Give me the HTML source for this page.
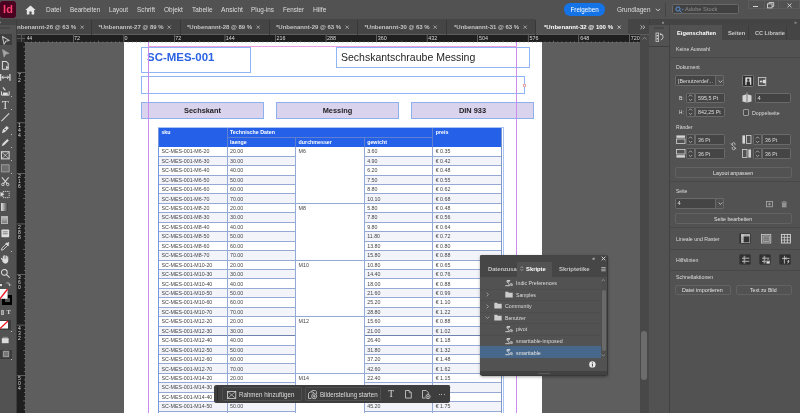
<!DOCTYPE html>
<html lang="de"><head><meta charset="utf-8"><title>InDesign</title>
<style>
html,body{margin:0;padding:0;}
body{width:800px;height:413px;overflow:hidden;position:relative;background:#5e5e5e;will-change:transform;font-family:"Liberation Sans",sans-serif;}
.a{position:absolute;display:block;}
.t{white-space:nowrap;}
svg{overflow:visible;}
</style></head><body>
<div class="a" style="left:25.50px;top:42.00px;width:615.00px;height:371.00px;background:#5e5e5e;"></div>
<div class="a" style="left:123.50px;top:42.00px;width:418.80px;height:371.00px;background:#ffffff;"></div>
<div class="a" style="left:141.00px;top:47.00px;width:109.50px;height:25.50px;border:0.7px solid #8fb5f4;box-sizing:border-box;"></div>
<div class="a" style="left:335.50px;top:47.30px;width:194.00px;height:21.10px;border:0.7px solid #8fb5f4;box-sizing:border-box;"></div>
<div class="a" style="left:141.00px;top:76.00px;width:384.00px;height:18.00px;border:0.7px solid #8fb5f4;box-sizing:border-box;"></div>
<div class="a" style="left:523.40px;top:84.00px;width:2.60px;height:2.80px;background:#fff;border:0.6px solid #e8a6a6;box-sizing:border-box;"></div>
<div class="a" style="left:141.00px;top:102.00px;width:123.00px;height:17.00px;background:#dad3ee;border:0.8px solid #8fb0ee;box-sizing:border-box;"></div>
<div class="a" style="left:276.00px;top:102.00px;width:123.00px;height:17.00px;background:#dad3ee;border:0.8px solid #8fb0ee;box-sizing:border-box;"></div>
<div class="a" style="left:411.00px;top:102.00px;width:123.00px;height:17.00px;background:#dad3ee;border:0.8px solid #8fb0ee;box-sizing:border-box;"></div>
<span class="a t" style="top:106px;font-size:7.4px;line-height:9px;height:9px;color:#1c1c1c;font-weight:bold;left:183.99px;transform-origin:50% 50%;">Sechskant</span>
<span class="a t" style="top:106px;font-size:7.4px;line-height:9px;height:9px;color:#1c1c1c;font-weight:bold;left:322.70px;transform-origin:50% 50%;">Messing</span>
<span class="a t" style="top:106px;font-size:7.4px;line-height:9px;height:9px;color:#1c1c1c;font-weight:bold;left:458.93px;transform-origin:50% 50%;">DIN 933</span>
<span class="a t" style="top:51px;font-size:11.4px;line-height:12px;height:12px;color:#2b63e3;font-weight:bold;left:147.00px;transform-origin:0 50%;transform:scaleX(1.005);">SC-MES-001</span>
<span class="a t" style="top:51px;font-size:10.5px;line-height:12px;height:12px;color:#1e1e1e;left:341.00px;transform-origin:0 50%;">Sechskantschraube Messing</span>
<div class="a" style="left:157.60px;top:127.20px;width:346.40px;height:290.00px;border:0.7px solid #a9c4f3;box-sizing:border-box;"></div>
<div class="a" style="left:158.40px;top:127.55px;width:343.20px;height:19.05px;background:#2560e8;"></div>
<div class="a" style="left:227.00px;top:136.75px;width:205.70px;height:0.70px;background:#5f7fd0;"></div>
<div class="a" style="left:226.70px;top:127.55px;width:0.70px;height:19.05px;background:#5f7fd0;"></div>
<div class="a" style="left:432.40px;top:127.55px;width:0.70px;height:19.05px;background:#5f7fd0;"></div>
<div class="a" style="left:295.30px;top:137.05px;width:0.70px;height:9.55px;background:#5f7fd0;"></div>
<div class="a" style="left:363.90px;top:137.05px;width:0.70px;height:9.55px;background:#5f7fd0;"></div>
<span class="a t" style="top:129px;font-size:5.3px;line-height:6px;height:6px;color:#fff;font-weight:bold;left:161.40px;transform-origin:0 50%;">sku</span>
<span class="a t" style="top:129px;font-size:5.3px;line-height:6px;height:6px;color:#fff;font-weight:bold;left:230.00px;transform-origin:0 50%;">Technische Daten</span>
<span class="a t" style="top:129px;font-size:5.3px;line-height:6px;height:6px;color:#fff;font-weight:bold;left:435.70px;transform-origin:0 50%;">preis</span>
<span class="a t" style="top:139px;font-size:5.3px;line-height:6px;height:6px;color:#fff;font-weight:bold;left:230.00px;transform-origin:0 50%;">laenge</span>
<span class="a t" style="top:139px;font-size:5.3px;line-height:6px;height:6px;color:#fff;font-weight:bold;left:298.60px;transform-origin:0 50%;">durchmesser</span>
<span class="a t" style="top:139px;font-size:5.3px;line-height:6px;height:6px;color:#fff;font-weight:bold;left:367.20px;transform-origin:0 50%;">gewicht</span>
<div class="a" style="left:158.40px;top:156.04px;width:137.20px;height:9.45px;background:#f2f4fa;"></div>
<div class="a" style="left:364.20px;top:156.04px;width:137.40px;height:9.45px;background:#f2f4fa;"></div>
<div class="a" style="left:158.40px;top:174.94px;width:137.20px;height:9.45px;background:#f2f4fa;"></div>
<div class="a" style="left:364.20px;top:174.94px;width:137.40px;height:9.45px;background:#f2f4fa;"></div>
<div class="a" style="left:158.40px;top:193.82px;width:137.20px;height:9.45px;background:#f2f4fa;"></div>
<div class="a" style="left:364.20px;top:193.82px;width:137.40px;height:9.45px;background:#f2f4fa;"></div>
<div class="a" style="left:158.40px;top:212.72px;width:137.20px;height:9.45px;background:#f2f4fa;"></div>
<div class="a" style="left:364.20px;top:212.72px;width:137.40px;height:9.45px;background:#f2f4fa;"></div>
<div class="a" style="left:158.40px;top:231.60px;width:137.20px;height:9.45px;background:#f2f4fa;"></div>
<div class="a" style="left:364.20px;top:231.60px;width:137.40px;height:9.45px;background:#f2f4fa;"></div>
<div class="a" style="left:158.40px;top:250.50px;width:137.20px;height:9.45px;background:#f2f4fa;"></div>
<div class="a" style="left:364.20px;top:250.50px;width:137.40px;height:9.45px;background:#f2f4fa;"></div>
<div class="a" style="left:158.40px;top:269.38px;width:137.20px;height:9.45px;background:#f2f4fa;"></div>
<div class="a" style="left:364.20px;top:269.38px;width:137.40px;height:9.45px;background:#f2f4fa;"></div>
<div class="a" style="left:158.40px;top:288.27px;width:137.20px;height:9.45px;background:#f2f4fa;"></div>
<div class="a" style="left:364.20px;top:288.27px;width:137.40px;height:9.45px;background:#f2f4fa;"></div>
<div class="a" style="left:158.40px;top:307.16px;width:137.20px;height:9.45px;background:#f2f4fa;"></div>
<div class="a" style="left:364.20px;top:307.16px;width:137.40px;height:9.45px;background:#f2f4fa;"></div>
<div class="a" style="left:158.40px;top:326.06px;width:137.20px;height:9.45px;background:#f2f4fa;"></div>
<div class="a" style="left:364.20px;top:326.06px;width:137.40px;height:9.45px;background:#f2f4fa;"></div>
<div class="a" style="left:158.40px;top:344.94px;width:137.20px;height:9.45px;background:#f2f4fa;"></div>
<div class="a" style="left:364.20px;top:344.94px;width:137.40px;height:9.45px;background:#f2f4fa;"></div>
<div class="a" style="left:158.40px;top:363.84px;width:137.20px;height:9.45px;background:#f2f4fa;"></div>
<div class="a" style="left:364.20px;top:363.84px;width:137.40px;height:9.45px;background:#f2f4fa;"></div>
<div class="a" style="left:158.40px;top:382.73px;width:137.20px;height:9.45px;background:#f2f4fa;"></div>
<div class="a" style="left:364.20px;top:382.73px;width:137.40px;height:9.45px;background:#f2f4fa;"></div>
<div class="a" style="left:158.40px;top:401.62px;width:137.20px;height:9.45px;background:#f2f4fa;"></div>
<div class="a" style="left:364.20px;top:401.62px;width:137.40px;height:9.45px;background:#f2f4fa;"></div>
<span class="a t" style="top:148px;font-size:5.3px;line-height:6px;height:6px;color:#444444;left:161.40px;transform-origin:0 50%;">SC-MES-001-M6-20</span>
<span class="a t" style="top:148px;font-size:5.3px;line-height:6px;height:6px;color:#444444;left:230.00px;transform-origin:0 50%;">20.00</span>
<span class="a t" style="top:148px;font-size:5.3px;line-height:6px;height:6px;color:#444444;left:298.60px;transform-origin:0 50%;">M6</span>
<span class="a t" style="top:148px;font-size:5.3px;line-height:6px;height:6px;color:#444444;left:367.20px;transform-origin:0 50%;">3.60</span>
<span class="a t" style="top:148px;font-size:5.3px;line-height:6px;height:6px;color:#444444;left:435.70px;transform-origin:0 50%;">€ 0.35</span>
<div class="a" style="left:158.40px;top:155.64px;width:137.20px;height:0.80px;background:#94a9d4;"></div>
<div class="a" style="left:364.20px;top:155.64px;width:137.40px;height:0.80px;background:#94a9d4;"></div>
<span class="a t" style="top:158px;font-size:5.3px;line-height:6px;height:6px;color:#444444;left:161.40px;transform-origin:0 50%;">SC-MES-001-M6-30</span>
<span class="a t" style="top:158px;font-size:5.3px;line-height:6px;height:6px;color:#444444;left:230.00px;transform-origin:0 50%;">30.00</span>
<span class="a t" style="top:158px;font-size:5.3px;line-height:6px;height:6px;color:#444444;left:367.20px;transform-origin:0 50%;">4.90</span>
<span class="a t" style="top:158px;font-size:5.3px;line-height:6px;height:6px;color:#444444;left:435.70px;transform-origin:0 50%;">€ 0.42</span>
<div class="a" style="left:158.40px;top:165.09px;width:137.20px;height:0.80px;background:#94a9d4;"></div>
<div class="a" style="left:364.20px;top:165.09px;width:137.40px;height:0.80px;background:#94a9d4;"></div>
<span class="a t" style="top:167px;font-size:5.3px;line-height:6px;height:6px;color:#444444;left:161.40px;transform-origin:0 50%;">SC-MES-001-M6-40</span>
<span class="a t" style="top:167px;font-size:5.3px;line-height:6px;height:6px;color:#444444;left:230.00px;transform-origin:0 50%;">40.00</span>
<span class="a t" style="top:167px;font-size:5.3px;line-height:6px;height:6px;color:#444444;left:367.20px;transform-origin:0 50%;">6.20</span>
<span class="a t" style="top:167px;font-size:5.3px;line-height:6px;height:6px;color:#444444;left:435.70px;transform-origin:0 50%;">€ 0.48</span>
<div class="a" style="left:158.40px;top:174.53px;width:137.20px;height:0.80px;background:#94a9d4;"></div>
<div class="a" style="left:364.20px;top:174.53px;width:137.40px;height:0.80px;background:#94a9d4;"></div>
<span class="a t" style="top:177px;font-size:5.3px;line-height:6px;height:6px;color:#444444;left:161.40px;transform-origin:0 50%;">SC-MES-001-M6-50</span>
<span class="a t" style="top:177px;font-size:5.3px;line-height:6px;height:6px;color:#444444;left:230.00px;transform-origin:0 50%;">50.00</span>
<span class="a t" style="top:177px;font-size:5.3px;line-height:6px;height:6px;color:#444444;left:367.20px;transform-origin:0 50%;">7.50</span>
<span class="a t" style="top:177px;font-size:5.3px;line-height:6px;height:6px;color:#444444;left:435.70px;transform-origin:0 50%;">€ 0.55</span>
<div class="a" style="left:158.40px;top:183.98px;width:137.20px;height:0.80px;background:#94a9d4;"></div>
<div class="a" style="left:364.20px;top:183.98px;width:137.40px;height:0.80px;background:#94a9d4;"></div>
<span class="a t" style="top:186px;font-size:5.3px;line-height:6px;height:6px;color:#444444;left:161.40px;transform-origin:0 50%;">SC-MES-001-M6-60</span>
<span class="a t" style="top:186px;font-size:5.3px;line-height:6px;height:6px;color:#444444;left:230.00px;transform-origin:0 50%;">60.00</span>
<span class="a t" style="top:186px;font-size:5.3px;line-height:6px;height:6px;color:#444444;left:367.20px;transform-origin:0 50%;">8.80</span>
<span class="a t" style="top:186px;font-size:5.3px;line-height:6px;height:6px;color:#444444;left:435.70px;transform-origin:0 50%;">€ 0.62</span>
<div class="a" style="left:158.40px;top:193.42px;width:137.20px;height:0.80px;background:#94a9d4;"></div>
<div class="a" style="left:364.20px;top:193.42px;width:137.40px;height:0.80px;background:#94a9d4;"></div>
<span class="a t" style="top:196px;font-size:5.3px;line-height:6px;height:6px;color:#444444;left:161.40px;transform-origin:0 50%;">SC-MES-001-M6-70</span>
<span class="a t" style="top:196px;font-size:5.3px;line-height:6px;height:6px;color:#444444;left:230.00px;transform-origin:0 50%;">70.00</span>
<span class="a t" style="top:196px;font-size:5.3px;line-height:6px;height:6px;color:#444444;left:367.20px;transform-origin:0 50%;">10.10</span>
<span class="a t" style="top:196px;font-size:5.3px;line-height:6px;height:6px;color:#444444;left:435.70px;transform-origin:0 50%;">€ 0.68</span>
<div class="a" style="left:158.40px;top:202.87px;width:343.20px;height:0.80px;background:#94a9d4;"></div>
<span class="a t" style="top:205px;font-size:5.3px;line-height:6px;height:6px;color:#444444;left:161.40px;transform-origin:0 50%;">SC-MES-001-M8-20</span>
<span class="a t" style="top:205px;font-size:5.3px;line-height:6px;height:6px;color:#444444;left:230.00px;transform-origin:0 50%;">20.00</span>
<span class="a t" style="top:205px;font-size:5.3px;line-height:6px;height:6px;color:#444444;left:298.60px;transform-origin:0 50%;">M8</span>
<span class="a t" style="top:205px;font-size:5.3px;line-height:6px;height:6px;color:#444444;left:367.20px;transform-origin:0 50%;">5.80</span>
<span class="a t" style="top:205px;font-size:5.3px;line-height:6px;height:6px;color:#444444;left:435.70px;transform-origin:0 50%;">€ 0.48</span>
<div class="a" style="left:158.40px;top:212.31px;width:137.20px;height:0.80px;background:#94a9d4;"></div>
<div class="a" style="left:364.20px;top:212.31px;width:137.40px;height:0.80px;background:#94a9d4;"></div>
<span class="a t" style="top:214px;font-size:5.3px;line-height:6px;height:6px;color:#444444;left:161.40px;transform-origin:0 50%;">SC-MES-001-M8-30</span>
<span class="a t" style="top:214px;font-size:5.3px;line-height:6px;height:6px;color:#444444;left:230.00px;transform-origin:0 50%;">30.00</span>
<span class="a t" style="top:214px;font-size:5.3px;line-height:6px;height:6px;color:#444444;left:367.20px;transform-origin:0 50%;">7.80</span>
<span class="a t" style="top:214px;font-size:5.3px;line-height:6px;height:6px;color:#444444;left:435.70px;transform-origin:0 50%;">€ 0.56</span>
<div class="a" style="left:158.40px;top:221.76px;width:137.20px;height:0.80px;background:#94a9d4;"></div>
<div class="a" style="left:364.20px;top:221.76px;width:137.40px;height:0.80px;background:#94a9d4;"></div>
<span class="a t" style="top:224px;font-size:5.3px;line-height:6px;height:6px;color:#444444;left:161.40px;transform-origin:0 50%;">SC-MES-001-M8-40</span>
<span class="a t" style="top:224px;font-size:5.3px;line-height:6px;height:6px;color:#444444;left:230.00px;transform-origin:0 50%;">40.00</span>
<span class="a t" style="top:224px;font-size:5.3px;line-height:6px;height:6px;color:#444444;left:367.20px;transform-origin:0 50%;">9.80</span>
<span class="a t" style="top:224px;font-size:5.3px;line-height:6px;height:6px;color:#444444;left:435.70px;transform-origin:0 50%;">€ 0.64</span>
<div class="a" style="left:158.40px;top:231.20px;width:137.20px;height:0.80px;background:#94a9d4;"></div>
<div class="a" style="left:364.20px;top:231.20px;width:137.40px;height:0.80px;background:#94a9d4;"></div>
<span class="a t" style="top:233px;font-size:5.3px;line-height:6px;height:6px;color:#444444;left:161.40px;transform-origin:0 50%;">SC-MES-001-M8-50</span>
<span class="a t" style="top:233px;font-size:5.3px;line-height:6px;height:6px;color:#444444;left:230.00px;transform-origin:0 50%;">50.00</span>
<span class="a t" style="top:233px;font-size:5.3px;line-height:6px;height:6px;color:#444444;left:367.20px;transform-origin:0 50%;">11.80</span>
<span class="a t" style="top:233px;font-size:5.3px;line-height:6px;height:6px;color:#444444;left:435.70px;transform-origin:0 50%;">€ 0.72</span>
<div class="a" style="left:158.40px;top:240.65px;width:137.20px;height:0.80px;background:#94a9d4;"></div>
<div class="a" style="left:364.20px;top:240.65px;width:137.40px;height:0.80px;background:#94a9d4;"></div>
<span class="a t" style="top:243px;font-size:5.3px;line-height:6px;height:6px;color:#444444;left:161.40px;transform-origin:0 50%;">SC-MES-001-M8-60</span>
<span class="a t" style="top:243px;font-size:5.3px;line-height:6px;height:6px;color:#444444;left:230.00px;transform-origin:0 50%;">60.00</span>
<span class="a t" style="top:243px;font-size:5.3px;line-height:6px;height:6px;color:#444444;left:367.20px;transform-origin:0 50%;">13.80</span>
<span class="a t" style="top:243px;font-size:5.3px;line-height:6px;height:6px;color:#444444;left:435.70px;transform-origin:0 50%;">€ 0.80</span>
<div class="a" style="left:158.40px;top:250.09px;width:137.20px;height:0.80px;background:#94a9d4;"></div>
<div class="a" style="left:364.20px;top:250.09px;width:137.40px;height:0.80px;background:#94a9d4;"></div>
<span class="a t" style="top:252px;font-size:5.3px;line-height:6px;height:6px;color:#444444;left:161.40px;transform-origin:0 50%;">SC-MES-001-M8-70</span>
<span class="a t" style="top:252px;font-size:5.3px;line-height:6px;height:6px;color:#444444;left:230.00px;transform-origin:0 50%;">70.00</span>
<span class="a t" style="top:252px;font-size:5.3px;line-height:6px;height:6px;color:#444444;left:367.20px;transform-origin:0 50%;">15.80</span>
<span class="a t" style="top:252px;font-size:5.3px;line-height:6px;height:6px;color:#444444;left:435.70px;transform-origin:0 50%;">€ 0.88</span>
<div class="a" style="left:158.40px;top:259.54px;width:343.20px;height:0.80px;background:#94a9d4;"></div>
<span class="a t" style="top:262px;font-size:5.3px;line-height:6px;height:6px;color:#444444;left:161.40px;transform-origin:0 50%;">SC-MES-001-M10-20</span>
<span class="a t" style="top:262px;font-size:5.3px;line-height:6px;height:6px;color:#444444;left:230.00px;transform-origin:0 50%;">20.00</span>
<span class="a t" style="top:262px;font-size:5.3px;line-height:6px;height:6px;color:#444444;left:298.60px;transform-origin:0 50%;">M10</span>
<span class="a t" style="top:262px;font-size:5.3px;line-height:6px;height:6px;color:#444444;left:367.20px;transform-origin:0 50%;">10.80</span>
<span class="a t" style="top:262px;font-size:5.3px;line-height:6px;height:6px;color:#444444;left:435.70px;transform-origin:0 50%;">€ 0.65</span>
<div class="a" style="left:158.40px;top:268.99px;width:137.20px;height:0.80px;background:#94a9d4;"></div>
<div class="a" style="left:364.20px;top:268.99px;width:137.40px;height:0.80px;background:#94a9d4;"></div>
<span class="a t" style="top:271px;font-size:5.3px;line-height:6px;height:6px;color:#444444;left:161.40px;transform-origin:0 50%;">SC-MES-001-M10-30</span>
<span class="a t" style="top:271px;font-size:5.3px;line-height:6px;height:6px;color:#444444;left:230.00px;transform-origin:0 50%;">30.00</span>
<span class="a t" style="top:271px;font-size:5.3px;line-height:6px;height:6px;color:#444444;left:367.20px;transform-origin:0 50%;">14.40</span>
<span class="a t" style="top:271px;font-size:5.3px;line-height:6px;height:6px;color:#444444;left:435.70px;transform-origin:0 50%;">€ 0.76</span>
<div class="a" style="left:158.40px;top:278.43px;width:137.20px;height:0.80px;background:#94a9d4;"></div>
<div class="a" style="left:364.20px;top:278.43px;width:137.40px;height:0.80px;background:#94a9d4;"></div>
<span class="a t" style="top:281px;font-size:5.3px;line-height:6px;height:6px;color:#444444;left:161.40px;transform-origin:0 50%;">SC-MES-001-M10-40</span>
<span class="a t" style="top:281px;font-size:5.3px;line-height:6px;height:6px;color:#444444;left:230.00px;transform-origin:0 50%;">40.00</span>
<span class="a t" style="top:281px;font-size:5.3px;line-height:6px;height:6px;color:#444444;left:367.20px;transform-origin:0 50%;">18.00</span>
<span class="a t" style="top:281px;font-size:5.3px;line-height:6px;height:6px;color:#444444;left:435.70px;transform-origin:0 50%;">€ 0.88</span>
<div class="a" style="left:158.40px;top:287.88px;width:137.20px;height:0.80px;background:#94a9d4;"></div>
<div class="a" style="left:364.20px;top:287.88px;width:137.40px;height:0.80px;background:#94a9d4;"></div>
<span class="a t" style="top:290px;font-size:5.3px;line-height:6px;height:6px;color:#444444;left:161.40px;transform-origin:0 50%;">SC-MES-001-M10-50</span>
<span class="a t" style="top:290px;font-size:5.3px;line-height:6px;height:6px;color:#444444;left:230.00px;transform-origin:0 50%;">50.00</span>
<span class="a t" style="top:290px;font-size:5.3px;line-height:6px;height:6px;color:#444444;left:367.20px;transform-origin:0 50%;">21.60</span>
<span class="a t" style="top:290px;font-size:5.3px;line-height:6px;height:6px;color:#444444;left:435.70px;transform-origin:0 50%;">€ 0.99</span>
<div class="a" style="left:158.40px;top:297.32px;width:137.20px;height:0.80px;background:#94a9d4;"></div>
<div class="a" style="left:364.20px;top:297.32px;width:137.40px;height:0.80px;background:#94a9d4;"></div>
<span class="a t" style="top:299px;font-size:5.3px;line-height:6px;height:6px;color:#444444;left:161.40px;transform-origin:0 50%;">SC-MES-001-M10-60</span>
<span class="a t" style="top:299px;font-size:5.3px;line-height:6px;height:6px;color:#444444;left:230.00px;transform-origin:0 50%;">60.00</span>
<span class="a t" style="top:299px;font-size:5.3px;line-height:6px;height:6px;color:#444444;left:367.20px;transform-origin:0 50%;">25.20</span>
<span class="a t" style="top:299px;font-size:5.3px;line-height:6px;height:6px;color:#444444;left:435.70px;transform-origin:0 50%;">€ 1.10</span>
<div class="a" style="left:158.40px;top:306.77px;width:137.20px;height:0.80px;background:#94a9d4;"></div>
<div class="a" style="left:364.20px;top:306.77px;width:137.40px;height:0.80px;background:#94a9d4;"></div>
<span class="a t" style="top:309px;font-size:5.3px;line-height:6px;height:6px;color:#444444;left:161.40px;transform-origin:0 50%;">SC-MES-001-M10-70</span>
<span class="a t" style="top:309px;font-size:5.3px;line-height:6px;height:6px;color:#444444;left:230.00px;transform-origin:0 50%;">70.00</span>
<span class="a t" style="top:309px;font-size:5.3px;line-height:6px;height:6px;color:#444444;left:367.20px;transform-origin:0 50%;">28.80</span>
<span class="a t" style="top:309px;font-size:5.3px;line-height:6px;height:6px;color:#444444;left:435.70px;transform-origin:0 50%;">€ 1.22</span>
<div class="a" style="left:158.40px;top:316.21px;width:343.20px;height:0.80px;background:#94a9d4;"></div>
<span class="a t" style="top:318px;font-size:5.3px;line-height:6px;height:6px;color:#444444;left:161.40px;transform-origin:0 50%;">SC-MES-001-M12-20</span>
<span class="a t" style="top:318px;font-size:5.3px;line-height:6px;height:6px;color:#444444;left:230.00px;transform-origin:0 50%;">20.00</span>
<span class="a t" style="top:318px;font-size:5.3px;line-height:6px;height:6px;color:#444444;left:298.60px;transform-origin:0 50%;">M12</span>
<span class="a t" style="top:318px;font-size:5.3px;line-height:6px;height:6px;color:#444444;left:367.20px;transform-origin:0 50%;">15.60</span>
<span class="a t" style="top:318px;font-size:5.3px;line-height:6px;height:6px;color:#444444;left:435.70px;transform-origin:0 50%;">€ 0.88</span>
<div class="a" style="left:158.40px;top:325.66px;width:137.20px;height:0.80px;background:#94a9d4;"></div>
<div class="a" style="left:364.20px;top:325.66px;width:137.40px;height:0.80px;background:#94a9d4;"></div>
<span class="a t" style="top:328px;font-size:5.3px;line-height:6px;height:6px;color:#444444;left:161.40px;transform-origin:0 50%;">SC-MES-001-M12-30</span>
<span class="a t" style="top:328px;font-size:5.3px;line-height:6px;height:6px;color:#444444;left:230.00px;transform-origin:0 50%;">30.00</span>
<span class="a t" style="top:328px;font-size:5.3px;line-height:6px;height:6px;color:#444444;left:367.20px;transform-origin:0 50%;">21.00</span>
<span class="a t" style="top:328px;font-size:5.3px;line-height:6px;height:6px;color:#444444;left:435.70px;transform-origin:0 50%;">€ 1.02</span>
<div class="a" style="left:158.40px;top:335.10px;width:137.20px;height:0.80px;background:#94a9d4;"></div>
<div class="a" style="left:364.20px;top:335.10px;width:137.40px;height:0.80px;background:#94a9d4;"></div>
<span class="a t" style="top:337px;font-size:5.3px;line-height:6px;height:6px;color:#444444;left:161.40px;transform-origin:0 50%;">SC-MES-001-M12-40</span>
<span class="a t" style="top:337px;font-size:5.3px;line-height:6px;height:6px;color:#444444;left:230.00px;transform-origin:0 50%;">40.00</span>
<span class="a t" style="top:337px;font-size:5.3px;line-height:6px;height:6px;color:#444444;left:367.20px;transform-origin:0 50%;">26.40</span>
<span class="a t" style="top:337px;font-size:5.3px;line-height:6px;height:6px;color:#444444;left:435.70px;transform-origin:0 50%;">€ 1.18</span>
<div class="a" style="left:158.40px;top:344.55px;width:137.20px;height:0.80px;background:#94a9d4;"></div>
<div class="a" style="left:364.20px;top:344.55px;width:137.40px;height:0.80px;background:#94a9d4;"></div>
<span class="a t" style="top:347px;font-size:5.3px;line-height:6px;height:6px;color:#444444;left:161.40px;transform-origin:0 50%;">SC-MES-001-M12-50</span>
<span class="a t" style="top:347px;font-size:5.3px;line-height:6px;height:6px;color:#444444;left:230.00px;transform-origin:0 50%;">50.00</span>
<span class="a t" style="top:347px;font-size:5.3px;line-height:6px;height:6px;color:#444444;left:367.20px;transform-origin:0 50%;">31.80</span>
<span class="a t" style="top:347px;font-size:5.3px;line-height:6px;height:6px;color:#444444;left:435.70px;transform-origin:0 50%;">€ 1.32</span>
<div class="a" style="left:158.40px;top:353.99px;width:137.20px;height:0.80px;background:#94a9d4;"></div>
<div class="a" style="left:364.20px;top:353.99px;width:137.40px;height:0.80px;background:#94a9d4;"></div>
<span class="a t" style="top:356px;font-size:5.3px;line-height:6px;height:6px;color:#444444;left:161.40px;transform-origin:0 50%;">SC-MES-001-M12-60</span>
<span class="a t" style="top:356px;font-size:5.3px;line-height:6px;height:6px;color:#444444;left:230.00px;transform-origin:0 50%;">60.00</span>
<span class="a t" style="top:356px;font-size:5.3px;line-height:6px;height:6px;color:#444444;left:367.20px;transform-origin:0 50%;">37.20</span>
<span class="a t" style="top:356px;font-size:5.3px;line-height:6px;height:6px;color:#444444;left:435.70px;transform-origin:0 50%;">€ 1.48</span>
<div class="a" style="left:158.40px;top:363.44px;width:137.20px;height:0.80px;background:#94a9d4;"></div>
<div class="a" style="left:364.20px;top:363.44px;width:137.40px;height:0.80px;background:#94a9d4;"></div>
<span class="a t" style="top:366px;font-size:5.3px;line-height:6px;height:6px;color:#444444;left:161.40px;transform-origin:0 50%;">SC-MES-001-M12-70</span>
<span class="a t" style="top:366px;font-size:5.3px;line-height:6px;height:6px;color:#444444;left:230.00px;transform-origin:0 50%;">70.00</span>
<span class="a t" style="top:366px;font-size:5.3px;line-height:6px;height:6px;color:#444444;left:367.20px;transform-origin:0 50%;">42.60</span>
<span class="a t" style="top:366px;font-size:5.3px;line-height:6px;height:6px;color:#444444;left:435.70px;transform-origin:0 50%;">€ 1.62</span>
<div class="a" style="left:158.40px;top:372.88px;width:343.20px;height:0.80px;background:#94a9d4;"></div>
<span class="a t" style="top:375px;font-size:5.3px;line-height:6px;height:6px;color:#444444;left:161.40px;transform-origin:0 50%;">SC-MES-001-M14-20</span>
<span class="a t" style="top:375px;font-size:5.3px;line-height:6px;height:6px;color:#444444;left:230.00px;transform-origin:0 50%;">20.00</span>
<span class="a t" style="top:375px;font-size:5.3px;line-height:6px;height:6px;color:#444444;left:298.60px;transform-origin:0 50%;">M14</span>
<span class="a t" style="top:375px;font-size:5.3px;line-height:6px;height:6px;color:#444444;left:367.20px;transform-origin:0 50%;">22.40</span>
<span class="a t" style="top:375px;font-size:5.3px;line-height:6px;height:6px;color:#444444;left:435.70px;transform-origin:0 50%;">€ 1.15</span>
<div class="a" style="left:158.40px;top:382.32px;width:137.20px;height:0.80px;background:#94a9d4;"></div>
<div class="a" style="left:364.20px;top:382.32px;width:137.40px;height:0.80px;background:#94a9d4;"></div>
<span class="a t" style="top:384px;font-size:5.3px;line-height:6px;height:6px;color:#444444;left:161.40px;transform-origin:0 50%;">SC-MES-001-M14-30</span>
<span class="a t" style="top:384px;font-size:5.3px;line-height:6px;height:6px;color:#444444;left:230.00px;transform-origin:0 50%;">30.00</span>
<span class="a t" style="top:384px;font-size:5.3px;line-height:6px;height:6px;color:#444444;left:367.20px;transform-origin:0 50%;">30.00</span>
<span class="a t" style="top:384px;font-size:5.3px;line-height:6px;height:6px;color:#444444;left:435.70px;transform-origin:0 50%;">€ 1.35</span>
<div class="a" style="left:158.40px;top:391.77px;width:137.20px;height:0.80px;background:#94a9d4;"></div>
<div class="a" style="left:364.20px;top:391.77px;width:137.40px;height:0.80px;background:#94a9d4;"></div>
<span class="a t" style="top:394px;font-size:5.3px;line-height:6px;height:6px;color:#444444;left:161.40px;transform-origin:0 50%;">SC-MES-001-M14-40</span>
<span class="a t" style="top:394px;font-size:5.3px;line-height:6px;height:6px;color:#444444;left:230.00px;transform-origin:0 50%;">40.00</span>
<span class="a t" style="top:394px;font-size:5.3px;line-height:6px;height:6px;color:#444444;left:367.20px;transform-origin:0 50%;">37.60</span>
<span class="a t" style="top:394px;font-size:5.3px;line-height:6px;height:6px;color:#444444;left:435.70px;transform-origin:0 50%;">€ 1.55</span>
<div class="a" style="left:158.40px;top:401.21px;width:137.20px;height:0.80px;background:#94a9d4;"></div>
<div class="a" style="left:364.20px;top:401.21px;width:137.40px;height:0.80px;background:#94a9d4;"></div>
<span class="a t" style="top:403px;font-size:5.3px;line-height:6px;height:6px;color:#444444;left:161.40px;transform-origin:0 50%;">SC-MES-001-M14-50</span>
<span class="a t" style="top:403px;font-size:5.3px;line-height:6px;height:6px;color:#444444;left:230.00px;transform-origin:0 50%;">50.00</span>
<span class="a t" style="top:403px;font-size:5.3px;line-height:6px;height:6px;color:#444444;left:367.20px;transform-origin:0 50%;">45.20</span>
<span class="a t" style="top:403px;font-size:5.3px;line-height:6px;height:6px;color:#444444;left:435.70px;transform-origin:0 50%;">€ 1.75</span>
<div class="a" style="left:158.40px;top:410.66px;width:137.20px;height:0.80px;background:#94a9d4;"></div>
<div class="a" style="left:364.20px;top:410.66px;width:137.40px;height:0.80px;background:#94a9d4;"></div>
<span class="a t" style="top:413px;font-size:5.3px;line-height:6px;height:6px;color:#444444;left:161.40px;transform-origin:0 50%;">SC-MES-001-M14-60</span>
<span class="a t" style="top:413px;font-size:5.3px;line-height:6px;height:6px;color:#444444;left:230.00px;transform-origin:0 50%;">60.00</span>
<span class="a t" style="top:413px;font-size:5.3px;line-height:6px;height:6px;color:#444444;left:367.20px;transform-origin:0 50%;">52.80</span>
<span class="a t" style="top:413px;font-size:5.3px;line-height:6px;height:6px;color:#444444;left:435.70px;transform-origin:0 50%;">€ 1.95</span>
<div class="a" style="left:158.40px;top:420.11px;width:137.20px;height:0.80px;background:#94a9d4;"></div>
<div class="a" style="left:364.20px;top:420.11px;width:137.40px;height:0.80px;background:#94a9d4;"></div>
<div class="a" style="left:158.40px;top:335.10px;width:137.20px;height:0.80px;background:#6d80ae;"></div>
<div class="a" style="left:364.20px;top:335.10px;width:137.40px;height:0.80px;background:#6d80ae;"></div>
<div class="a" style="left:158.05px;top:146.60px;width:0.70px;height:266.40px;background:#94a9d4;"></div>
<div class="a" style="left:226.65px;top:146.60px;width:0.70px;height:266.40px;background:#94a9d4;"></div>
<div class="a" style="left:295.25px;top:146.60px;width:0.70px;height:266.40px;background:#94a9d4;"></div>
<div class="a" style="left:363.85px;top:146.60px;width:0.70px;height:266.40px;background:#94a9d4;"></div>
<div class="a" style="left:432.35px;top:146.60px;width:0.70px;height:266.40px;background:#94a9d4;"></div>
<div class="a" style="left:501.25px;top:146.60px;width:0.70px;height:266.40px;background:#94a9d4;"></div>
<div class="a" style="left:158.00px;top:127.55px;width:0.90px;height:285.45px;background:#7398e0;"></div>
<div class="a" style="left:501.20px;top:127.55px;width:0.90px;height:285.45px;background:#7f98c9;"></div>
<div class="a" style="left:148.10px;top:42.00px;width:0.70px;height:371.00px;background:#cc8cef;"></div>
<div class="a" style="left:516.00px;top:42.00px;width:0.70px;height:371.00px;background:#cc8cef;"></div>
<div class="a" style="left:148.20px;top:46.20px;width:368.60px;height:0.80px;background:#ee9fe0;"></div>
<div class="a" style="left:16.80px;top:34.50px;width:623.40px;height:7.70px;background:#1f1f1f;"></div>
<div class="a" style="left:16.80px;top:42.00px;width:8.40px;height:371.00px;background:#1f1f1f;"></div>
<svg class="a" style="left:0.00px;top:34.50px;" width="640" height="7.7" viewBox="0 0 640 7.7"><rect x="26.28" y="6.50" width="0.6" height="1.20" fill="#8c8c8c"/><rect x="30.50" y="6.50" width="0.6" height="1.20" fill="#8c8c8c"/><rect x="34.72" y="6.50" width="0.6" height="1.20" fill="#8c8c8c"/><rect x="38.93" y="6.50" width="0.6" height="1.20" fill="#8c8c8c"/><rect x="43.15" y="6.50" width="0.6" height="1.20" fill="#8c8c8c"/><rect x="47.37" y="5.70" width="0.6" height="2.00" fill="#8c8c8c"/><rect x="51.59" y="6.50" width="0.6" height="1.20" fill="#8c8c8c"/><rect x="55.81" y="6.50" width="0.6" height="1.20" fill="#8c8c8c"/><rect x="60.02" y="6.50" width="0.6" height="1.20" fill="#8c8c8c"/><rect x="64.24" y="6.50" width="0.6" height="1.20" fill="#8c8c8c"/><rect x="68.46" y="6.50" width="0.6" height="1.20" fill="#8c8c8c"/><rect x="72.68" y="0.00" width="0.6" height="7.70" fill="#8c8c8c"/><rect x="76.90" y="6.50" width="0.6" height="1.20" fill="#8c8c8c"/><rect x="81.12" y="6.50" width="0.6" height="1.20" fill="#8c8c8c"/><rect x="85.33" y="6.50" width="0.6" height="1.20" fill="#8c8c8c"/><rect x="89.55" y="6.50" width="0.6" height="1.20" fill="#8c8c8c"/><rect x="93.77" y="6.50" width="0.6" height="1.20" fill="#8c8c8c"/><rect x="97.99" y="5.70" width="0.6" height="2.00" fill="#8c8c8c"/><rect x="102.21" y="6.50" width="0.6" height="1.20" fill="#8c8c8c"/><rect x="106.43" y="6.50" width="0.6" height="1.20" fill="#8c8c8c"/><rect x="110.64" y="6.50" width="0.6" height="1.20" fill="#8c8c8c"/><rect x="114.86" y="6.50" width="0.6" height="1.20" fill="#8c8c8c"/><rect x="119.08" y="6.50" width="0.6" height="1.20" fill="#8c8c8c"/><rect x="123.30" y="0.00" width="0.6" height="7.70" fill="#8c8c8c"/><rect x="127.52" y="6.50" width="0.6" height="1.20" fill="#8c8c8c"/><rect x="131.74" y="6.50" width="0.6" height="1.20" fill="#8c8c8c"/><rect x="135.95" y="6.50" width="0.6" height="1.20" fill="#8c8c8c"/><rect x="140.17" y="6.50" width="0.6" height="1.20" fill="#8c8c8c"/><rect x="144.39" y="6.50" width="0.6" height="1.20" fill="#8c8c8c"/><rect x="148.61" y="5.70" width="0.6" height="2.00" fill="#8c8c8c"/><rect x="152.83" y="6.50" width="0.6" height="1.20" fill="#8c8c8c"/><rect x="157.05" y="6.50" width="0.6" height="1.20" fill="#8c8c8c"/><rect x="161.26" y="6.50" width="0.6" height="1.20" fill="#8c8c8c"/><rect x="165.48" y="6.50" width="0.6" height="1.20" fill="#8c8c8c"/><rect x="169.70" y="6.50" width="0.6" height="1.20" fill="#8c8c8c"/><rect x="173.92" y="0.00" width="0.6" height="7.70" fill="#8c8c8c"/><rect x="178.14" y="6.50" width="0.6" height="1.20" fill="#8c8c8c"/><rect x="182.36" y="6.50" width="0.6" height="1.20" fill="#8c8c8c"/><rect x="186.57" y="6.50" width="0.6" height="1.20" fill="#8c8c8c"/><rect x="190.79" y="6.50" width="0.6" height="1.20" fill="#8c8c8c"/><rect x="195.01" y="6.50" width="0.6" height="1.20" fill="#8c8c8c"/><rect x="199.23" y="5.70" width="0.6" height="2.00" fill="#8c8c8c"/><rect x="203.45" y="6.50" width="0.6" height="1.20" fill="#8c8c8c"/><rect x="207.67" y="6.50" width="0.6" height="1.20" fill="#8c8c8c"/><rect x="211.88" y="6.50" width="0.6" height="1.20" fill="#8c8c8c"/><rect x="216.10" y="6.50" width="0.6" height="1.20" fill="#8c8c8c"/><rect x="220.32" y="6.50" width="0.6" height="1.20" fill="#8c8c8c"/><rect x="224.54" y="0.00" width="0.6" height="7.70" fill="#8c8c8c"/><rect x="228.76" y="6.50" width="0.6" height="1.20" fill="#8c8c8c"/><rect x="232.98" y="6.50" width="0.6" height="1.20" fill="#8c8c8c"/><rect x="237.19" y="6.50" width="0.6" height="1.20" fill="#8c8c8c"/><rect x="241.41" y="6.50" width="0.6" height="1.20" fill="#8c8c8c"/><rect x="245.63" y="6.50" width="0.6" height="1.20" fill="#8c8c8c"/><rect x="249.85" y="5.70" width="0.6" height="2.00" fill="#8c8c8c"/><rect x="254.07" y="6.50" width="0.6" height="1.20" fill="#8c8c8c"/><rect x="258.29" y="6.50" width="0.6" height="1.20" fill="#8c8c8c"/><rect x="262.50" y="6.50" width="0.6" height="1.20" fill="#8c8c8c"/><rect x="266.72" y="6.50" width="0.6" height="1.20" fill="#8c8c8c"/><rect x="270.94" y="6.50" width="0.6" height="1.20" fill="#8c8c8c"/><rect x="275.16" y="0.00" width="0.6" height="7.70" fill="#8c8c8c"/><rect x="279.38" y="6.50" width="0.6" height="1.20" fill="#8c8c8c"/><rect x="283.60" y="6.50" width="0.6" height="1.20" fill="#8c8c8c"/><rect x="287.81" y="6.50" width="0.6" height="1.20" fill="#8c8c8c"/><rect x="292.03" y="6.50" width="0.6" height="1.20" fill="#8c8c8c"/><rect x="296.25" y="6.50" width="0.6" height="1.20" fill="#8c8c8c"/><rect x="300.47" y="5.70" width="0.6" height="2.00" fill="#8c8c8c"/><rect x="304.69" y="6.50" width="0.6" height="1.20" fill="#8c8c8c"/><rect x="308.91" y="6.50" width="0.6" height="1.20" fill="#8c8c8c"/><rect x="313.12" y="6.50" width="0.6" height="1.20" fill="#8c8c8c"/><rect x="317.34" y="6.50" width="0.6" height="1.20" fill="#8c8c8c"/><rect x="321.56" y="6.50" width="0.6" height="1.20" fill="#8c8c8c"/><rect x="325.78" y="0.00" width="0.6" height="7.70" fill="#8c8c8c"/><rect x="330.00" y="6.50" width="0.6" height="1.20" fill="#8c8c8c"/><rect x="334.22" y="6.50" width="0.6" height="1.20" fill="#8c8c8c"/><rect x="338.44" y="6.50" width="0.6" height="1.20" fill="#8c8c8c"/><rect x="342.65" y="6.50" width="0.6" height="1.20" fill="#8c8c8c"/><rect x="346.87" y="6.50" width="0.6" height="1.20" fill="#8c8c8c"/><rect x="351.09" y="5.70" width="0.6" height="2.00" fill="#8c8c8c"/><rect x="355.31" y="6.50" width="0.6" height="1.20" fill="#8c8c8c"/><rect x="359.53" y="6.50" width="0.6" height="1.20" fill="#8c8c8c"/><rect x="363.74" y="6.50" width="0.6" height="1.20" fill="#8c8c8c"/><rect x="367.96" y="6.50" width="0.6" height="1.20" fill="#8c8c8c"/><rect x="372.18" y="6.50" width="0.6" height="1.20" fill="#8c8c8c"/><rect x="376.40" y="0.00" width="0.6" height="7.70" fill="#8c8c8c"/><rect x="380.62" y="6.50" width="0.6" height="1.20" fill="#8c8c8c"/><rect x="384.84" y="6.50" width="0.6" height="1.20" fill="#8c8c8c"/><rect x="389.06" y="6.50" width="0.6" height="1.20" fill="#8c8c8c"/><rect x="393.27" y="6.50" width="0.6" height="1.20" fill="#8c8c8c"/><rect x="397.49" y="6.50" width="0.6" height="1.20" fill="#8c8c8c"/><rect x="401.71" y="5.70" width="0.6" height="2.00" fill="#8c8c8c"/><rect x="405.93" y="6.50" width="0.6" height="1.20" fill="#8c8c8c"/><rect x="410.15" y="6.50" width="0.6" height="1.20" fill="#8c8c8c"/><rect x="414.36" y="6.50" width="0.6" height="1.20" fill="#8c8c8c"/><rect x="418.58" y="6.50" width="0.6" height="1.20" fill="#8c8c8c"/><rect x="422.80" y="6.50" width="0.6" height="1.20" fill="#8c8c8c"/><rect x="427.02" y="0.00" width="0.6" height="7.70" fill="#8c8c8c"/><rect x="431.24" y="6.50" width="0.6" height="1.20" fill="#8c8c8c"/><rect x="435.46" y="6.50" width="0.6" height="1.20" fill="#8c8c8c"/><rect x="439.68" y="6.50" width="0.6" height="1.20" fill="#8c8c8c"/><rect x="443.89" y="6.50" width="0.6" height="1.20" fill="#8c8c8c"/><rect x="448.11" y="6.50" width="0.6" height="1.20" fill="#8c8c8c"/><rect x="452.33" y="5.70" width="0.6" height="2.00" fill="#8c8c8c"/><rect x="456.55" y="6.50" width="0.6" height="1.20" fill="#8c8c8c"/><rect x="460.77" y="6.50" width="0.6" height="1.20" fill="#8c8c8c"/><rect x="464.98" y="6.50" width="0.6" height="1.20" fill="#8c8c8c"/><rect x="469.20" y="6.50" width="0.6" height="1.20" fill="#8c8c8c"/><rect x="473.42" y="6.50" width="0.6" height="1.20" fill="#8c8c8c"/><rect x="477.64" y="0.00" width="0.6" height="7.70" fill="#8c8c8c"/><rect x="481.86" y="6.50" width="0.6" height="1.20" fill="#8c8c8c"/><rect x="486.08" y="6.50" width="0.6" height="1.20" fill="#8c8c8c"/><rect x="490.30" y="6.50" width="0.6" height="1.20" fill="#8c8c8c"/><rect x="494.51" y="6.50" width="0.6" height="1.20" fill="#8c8c8c"/><rect x="498.73" y="6.50" width="0.6" height="1.20" fill="#8c8c8c"/><rect x="502.95" y="5.70" width="0.6" height="2.00" fill="#8c8c8c"/><rect x="507.17" y="6.50" width="0.6" height="1.20" fill="#8c8c8c"/><rect x="511.39" y="6.50" width="0.6" height="1.20" fill="#8c8c8c"/><rect x="515.61" y="6.50" width="0.6" height="1.20" fill="#8c8c8c"/><rect x="519.82" y="6.50" width="0.6" height="1.20" fill="#8c8c8c"/><rect x="524.04" y="6.50" width="0.6" height="1.20" fill="#8c8c8c"/><rect x="528.26" y="0.00" width="0.6" height="7.70" fill="#8c8c8c"/><rect x="532.48" y="6.50" width="0.6" height="1.20" fill="#8c8c8c"/><rect x="536.70" y="6.50" width="0.6" height="1.20" fill="#8c8c8c"/><rect x="540.92" y="6.50" width="0.6" height="1.20" fill="#8c8c8c"/><rect x="545.13" y="6.50" width="0.6" height="1.20" fill="#8c8c8c"/><rect x="549.35" y="6.50" width="0.6" height="1.20" fill="#8c8c8c"/><rect x="553.57" y="5.70" width="0.6" height="2.00" fill="#8c8c8c"/><rect x="557.79" y="6.50" width="0.6" height="1.20" fill="#8c8c8c"/><rect x="562.01" y="6.50" width="0.6" height="1.20" fill="#8c8c8c"/><rect x="566.23" y="6.50" width="0.6" height="1.20" fill="#8c8c8c"/><rect x="570.44" y="6.50" width="0.6" height="1.20" fill="#8c8c8c"/><rect x="574.66" y="6.50" width="0.6" height="1.20" fill="#8c8c8c"/><rect x="578.88" y="0.00" width="0.6" height="7.70" fill="#8c8c8c"/><rect x="583.10" y="6.50" width="0.6" height="1.20" fill="#8c8c8c"/><rect x="587.32" y="6.50" width="0.6" height="1.20" fill="#8c8c8c"/><rect x="591.54" y="6.50" width="0.6" height="1.20" fill="#8c8c8c"/><rect x="595.75" y="6.50" width="0.6" height="1.20" fill="#8c8c8c"/><rect x="599.97" y="6.50" width="0.6" height="1.20" fill="#8c8c8c"/><rect x="604.19" y="5.70" width="0.6" height="2.00" fill="#8c8c8c"/><rect x="608.41" y="6.50" width="0.6" height="1.20" fill="#8c8c8c"/><rect x="612.63" y="6.50" width="0.6" height="1.20" fill="#8c8c8c"/><rect x="616.85" y="6.50" width="0.6" height="1.20" fill="#8c8c8c"/><rect x="621.06" y="6.50" width="0.6" height="1.20" fill="#8c8c8c"/><rect x="625.28" y="6.50" width="0.6" height="1.20" fill="#8c8c8c"/><rect x="629.50" y="0.00" width="0.6" height="7.70" fill="#8c8c8c"/><rect x="633.72" y="6.50" width="0.6" height="1.20" fill="#8c8c8c"/><rect x="637.94" y="6.50" width="0.6" height="1.20" fill="#8c8c8c"/></svg>
<span class="a t" style="top:35px;font-size:5.4px;line-height:6px;height:6px;color:#dcdcdc;left:27.00px;transform-origin:0 50%;transform:scaleX(0.866);">44</span>
<span class="a t" style="top:35px;font-size:5.4px;line-height:6px;height:6px;color:#dcdcdc;left:73.98px;transform-origin:0 50%;">72</span>
<span class="a t" style="top:35px;font-size:5.4px;line-height:6px;height:6px;color:#dcdcdc;left:124.60px;transform-origin:0 50%;">0</span>
<span class="a t" style="top:35px;font-size:5.4px;line-height:6px;height:6px;color:#dcdcdc;left:175.22px;transform-origin:0 50%;">72</span>
<span class="a t" style="top:35px;font-size:5.4px;line-height:6px;height:6px;color:#dcdcdc;left:225.84px;transform-origin:0 50%;">144</span>
<span class="a t" style="top:35px;font-size:5.4px;line-height:6px;height:6px;color:#dcdcdc;left:276.46px;transform-origin:0 50%;">216</span>
<span class="a t" style="top:35px;font-size:5.4px;line-height:6px;height:6px;color:#dcdcdc;left:327.08px;transform-origin:0 50%;">288</span>
<span class="a t" style="top:35px;font-size:5.4px;line-height:6px;height:6px;color:#dcdcdc;left:377.70px;transform-origin:0 50%;">360</span>
<span class="a t" style="top:35px;font-size:5.4px;line-height:6px;height:6px;color:#dcdcdc;left:428.32px;transform-origin:0 50%;">432</span>
<span class="a t" style="top:35px;font-size:5.4px;line-height:6px;height:6px;color:#dcdcdc;left:478.94px;transform-origin:0 50%;">504</span>
<span class="a t" style="top:35px;font-size:5.4px;line-height:6px;height:6px;color:#dcdcdc;left:529.56px;transform-origin:0 50%;">576</span>
<span class="a t" style="top:35px;font-size:5.4px;line-height:6px;height:6px;color:#dcdcdc;left:580.18px;transform-origin:0 50%;">648</span>
<span class="a t" style="top:35px;font-size:5.4px;line-height:6px;height:6px;color:#dcdcdc;left:630.80px;transform-origin:0 50%;">720</span>
<svg class="a" style="left:16.80px;top:0.00px;" width="8.4" height="413" viewBox="0.9 0 8.4 413"><rect x="7.80" y="42.29" width="1.50" height="0.6" fill="#8c8c8c"/><rect x="6.90" y="46.51" width="2.40" height="0.6" fill="#8c8c8c"/><rect x="7.80" y="50.73" width="1.50" height="0.6" fill="#8c8c8c"/><rect x="7.80" y="54.95" width="1.50" height="0.6" fill="#8c8c8c"/><rect x="7.80" y="59.16" width="1.50" height="0.6" fill="#8c8c8c"/><rect x="7.80" y="63.38" width="1.50" height="0.6" fill="#8c8c8c"/><rect x="7.80" y="67.60" width="1.50" height="0.6" fill="#8c8c8c"/><rect x="0.00" y="71.82" width="9.30" height="0.6" fill="#8c8c8c"/><rect x="7.80" y="76.04" width="1.50" height="0.6" fill="#8c8c8c"/><rect x="7.80" y="80.26" width="1.50" height="0.6" fill="#8c8c8c"/><rect x="7.80" y="84.48" width="1.50" height="0.6" fill="#8c8c8c"/><rect x="7.80" y="88.69" width="1.50" height="0.6" fill="#8c8c8c"/><rect x="7.80" y="92.91" width="1.50" height="0.6" fill="#8c8c8c"/><rect x="6.90" y="97.13" width="2.40" height="0.6" fill="#8c8c8c"/><rect x="7.80" y="101.35" width="1.50" height="0.6" fill="#8c8c8c"/><rect x="7.80" y="105.57" width="1.50" height="0.6" fill="#8c8c8c"/><rect x="7.80" y="109.78" width="1.50" height="0.6" fill="#8c8c8c"/><rect x="7.80" y="114.00" width="1.50" height="0.6" fill="#8c8c8c"/><rect x="7.80" y="118.22" width="1.50" height="0.6" fill="#8c8c8c"/><rect x="0.00" y="122.44" width="9.30" height="0.6" fill="#8c8c8c"/><rect x="7.80" y="126.66" width="1.50" height="0.6" fill="#8c8c8c"/><rect x="7.80" y="130.88" width="1.50" height="0.6" fill="#8c8c8c"/><rect x="7.80" y="135.09" width="1.50" height="0.6" fill="#8c8c8c"/><rect x="7.80" y="139.31" width="1.50" height="0.6" fill="#8c8c8c"/><rect x="7.80" y="143.53" width="1.50" height="0.6" fill="#8c8c8c"/><rect x="6.90" y="147.75" width="2.40" height="0.6" fill="#8c8c8c"/><rect x="7.80" y="151.97" width="1.50" height="0.6" fill="#8c8c8c"/><rect x="7.80" y="156.19" width="1.50" height="0.6" fill="#8c8c8c"/><rect x="7.80" y="160.40" width="1.50" height="0.6" fill="#8c8c8c"/><rect x="7.80" y="164.62" width="1.50" height="0.6" fill="#8c8c8c"/><rect x="7.80" y="168.84" width="1.50" height="0.6" fill="#8c8c8c"/><rect x="0.00" y="173.06" width="9.30" height="0.6" fill="#8c8c8c"/><rect x="7.80" y="177.28" width="1.50" height="0.6" fill="#8c8c8c"/><rect x="7.80" y="181.50" width="1.50" height="0.6" fill="#8c8c8c"/><rect x="7.80" y="185.71" width="1.50" height="0.6" fill="#8c8c8c"/><rect x="7.80" y="189.93" width="1.50" height="0.6" fill="#8c8c8c"/><rect x="7.80" y="194.15" width="1.50" height="0.6" fill="#8c8c8c"/><rect x="6.90" y="198.37" width="2.40" height="0.6" fill="#8c8c8c"/><rect x="7.80" y="202.59" width="1.50" height="0.6" fill="#8c8c8c"/><rect x="7.80" y="206.81" width="1.50" height="0.6" fill="#8c8c8c"/><rect x="7.80" y="211.02" width="1.50" height="0.6" fill="#8c8c8c"/><rect x="7.80" y="215.24" width="1.50" height="0.6" fill="#8c8c8c"/><rect x="7.80" y="219.46" width="1.50" height="0.6" fill="#8c8c8c"/><rect x="0.00" y="223.68" width="9.30" height="0.6" fill="#8c8c8c"/><rect x="7.80" y="227.90" width="1.50" height="0.6" fill="#8c8c8c"/><rect x="7.80" y="232.12" width="1.50" height="0.6" fill="#8c8c8c"/><rect x="7.80" y="236.33" width="1.50" height="0.6" fill="#8c8c8c"/><rect x="7.80" y="240.55" width="1.50" height="0.6" fill="#8c8c8c"/><rect x="7.80" y="244.77" width="1.50" height="0.6" fill="#8c8c8c"/><rect x="6.90" y="248.99" width="2.40" height="0.6" fill="#8c8c8c"/><rect x="7.80" y="253.21" width="1.50" height="0.6" fill="#8c8c8c"/><rect x="7.80" y="257.43" width="1.50" height="0.6" fill="#8c8c8c"/><rect x="7.80" y="261.64" width="1.50" height="0.6" fill="#8c8c8c"/><rect x="7.80" y="265.86" width="1.50" height="0.6" fill="#8c8c8c"/><rect x="7.80" y="270.08" width="1.50" height="0.6" fill="#8c8c8c"/><rect x="0.00" y="274.30" width="9.30" height="0.6" fill="#8c8c8c"/><rect x="7.80" y="278.52" width="1.50" height="0.6" fill="#8c8c8c"/><rect x="7.80" y="282.74" width="1.50" height="0.6" fill="#8c8c8c"/><rect x="7.80" y="286.95" width="1.50" height="0.6" fill="#8c8c8c"/><rect x="7.80" y="291.17" width="1.50" height="0.6" fill="#8c8c8c"/><rect x="7.80" y="295.39" width="1.50" height="0.6" fill="#8c8c8c"/><rect x="6.90" y="299.61" width="2.40" height="0.6" fill="#8c8c8c"/><rect x="7.80" y="303.83" width="1.50" height="0.6" fill="#8c8c8c"/><rect x="7.80" y="308.05" width="1.50" height="0.6" fill="#8c8c8c"/><rect x="7.80" y="312.26" width="1.50" height="0.6" fill="#8c8c8c"/><rect x="7.80" y="316.48" width="1.50" height="0.6" fill="#8c8c8c"/><rect x="7.80" y="320.70" width="1.50" height="0.6" fill="#8c8c8c"/><rect x="0.00" y="324.92" width="9.30" height="0.6" fill="#8c8c8c"/><rect x="7.80" y="329.14" width="1.50" height="0.6" fill="#8c8c8c"/><rect x="7.80" y="333.36" width="1.50" height="0.6" fill="#8c8c8c"/><rect x="7.80" y="337.57" width="1.50" height="0.6" fill="#8c8c8c"/><rect x="7.80" y="341.79" width="1.50" height="0.6" fill="#8c8c8c"/><rect x="7.80" y="346.01" width="1.50" height="0.6" fill="#8c8c8c"/><rect x="6.90" y="350.23" width="2.40" height="0.6" fill="#8c8c8c"/><rect x="7.80" y="354.45" width="1.50" height="0.6" fill="#8c8c8c"/><rect x="7.80" y="358.67" width="1.50" height="0.6" fill="#8c8c8c"/><rect x="7.80" y="362.88" width="1.50" height="0.6" fill="#8c8c8c"/><rect x="7.80" y="367.10" width="1.50" height="0.6" fill="#8c8c8c"/><rect x="7.80" y="371.32" width="1.50" height="0.6" fill="#8c8c8c"/><rect x="0.00" y="375.54" width="9.30" height="0.6" fill="#8c8c8c"/><rect x="7.80" y="379.76" width="1.50" height="0.6" fill="#8c8c8c"/><rect x="7.80" y="383.98" width="1.50" height="0.6" fill="#8c8c8c"/><rect x="7.80" y="388.19" width="1.50" height="0.6" fill="#8c8c8c"/><rect x="7.80" y="392.41" width="1.50" height="0.6" fill="#8c8c8c"/><rect x="7.80" y="396.63" width="1.50" height="0.6" fill="#8c8c8c"/><rect x="6.90" y="400.85" width="2.40" height="0.6" fill="#8c8c8c"/><rect x="7.80" y="405.07" width="1.50" height="0.6" fill="#8c8c8c"/><rect x="7.80" y="409.29" width="1.50" height="0.6" fill="#8c8c8c"/></svg>
<span class="a t" style="top:72px;font-size:5.4px;line-height:6px;height:6px;color:#dcdcdc;left:17.90px;transform-origin:0 50%;transform:scaleX(0.932);">7</span>
<span class="a t" style="top:77px;font-size:5.4px;line-height:6px;height:6px;color:#dcdcdc;left:17.90px;transform-origin:0 50%;transform:scaleX(0.932);">2</span>
<span class="a t" style="top:122px;font-size:5.4px;line-height:6px;height:6px;color:#dcdcdc;left:17.90px;transform-origin:0 50%;transform:scaleX(0.932);">1</span>
<span class="a t" style="top:127px;font-size:5.4px;line-height:6px;height:6px;color:#dcdcdc;left:17.90px;transform-origin:0 50%;transform:scaleX(0.932);">4</span>
<span class="a t" style="top:132px;font-size:5.4px;line-height:6px;height:6px;color:#dcdcdc;left:17.90px;transform-origin:0 50%;transform:scaleX(0.932);">4</span>
<span class="a t" style="top:173px;font-size:5.4px;line-height:6px;height:6px;color:#dcdcdc;left:17.90px;transform-origin:0 50%;transform:scaleX(0.932);">2</span>
<span class="a t" style="top:178px;font-size:5.4px;line-height:6px;height:6px;color:#dcdcdc;left:17.90px;transform-origin:0 50%;transform:scaleX(0.932);">1</span>
<span class="a t" style="top:183px;font-size:5.4px;line-height:6px;height:6px;color:#dcdcdc;left:17.90px;transform-origin:0 50%;transform:scaleX(0.932);">6</span>
<span class="a t" style="top:224px;font-size:5.4px;line-height:6px;height:6px;color:#dcdcdc;left:17.90px;transform-origin:0 50%;transform:scaleX(0.932);">2</span>
<span class="a t" style="top:229px;font-size:5.4px;line-height:6px;height:6px;color:#dcdcdc;left:17.90px;transform-origin:0 50%;transform:scaleX(0.932);">8</span>
<span class="a t" style="top:234px;font-size:5.4px;line-height:6px;height:6px;color:#dcdcdc;left:17.90px;transform-origin:0 50%;transform:scaleX(0.932);">8</span>
<span class="a t" style="top:274px;font-size:5.4px;line-height:6px;height:6px;color:#dcdcdc;left:17.90px;transform-origin:0 50%;transform:scaleX(0.932);">3</span>
<span class="a t" style="top:279px;font-size:5.4px;line-height:6px;height:6px;color:#dcdcdc;left:17.90px;transform-origin:0 50%;transform:scaleX(0.932);">6</span>
<span class="a t" style="top:284px;font-size:5.4px;line-height:6px;height:6px;color:#dcdcdc;left:17.90px;transform-origin:0 50%;transform:scaleX(0.932);">0</span>
<span class="a t" style="top:325px;font-size:5.4px;line-height:6px;height:6px;color:#dcdcdc;left:17.90px;transform-origin:0 50%;transform:scaleX(0.932);">4</span>
<span class="a t" style="top:330px;font-size:5.4px;line-height:6px;height:6px;color:#dcdcdc;left:17.90px;transform-origin:0 50%;transform:scaleX(0.932);">3</span>
<span class="a t" style="top:335px;font-size:5.4px;line-height:6px;height:6px;color:#dcdcdc;left:17.90px;transform-origin:0 50%;transform:scaleX(0.932);">2</span>
<span class="a t" style="top:375px;font-size:5.4px;line-height:6px;height:6px;color:#dcdcdc;left:17.90px;transform-origin:0 50%;transform:scaleX(0.932);">5</span>
<span class="a t" style="top:380px;font-size:5.4px;line-height:6px;height:6px;color:#dcdcdc;left:17.90px;transform-origin:0 50%;transform:scaleX(0.932);">0</span>
<span class="a t" style="top:385px;font-size:5.4px;line-height:6px;height:6px;color:#dcdcdc;left:17.90px;transform-origin:0 50%;transform:scaleX(0.932);">4</span>
<div class="a" style="left:16.80px;top:34.50px;width:8.40px;height:7.70px;background:#2b2b2b;"></div>
<div class="a" style="left:20.80px;top:34.50px;width:0.50px;height:7.70px;background:#555;"></div>
<div class="a" style="left:16.80px;top:38.20px;width:8.40px;height:0.50px;background:#555;"></div>
<div class="a" style="left:0.00px;top:18.80px;width:16.60px;height:394.20px;background:#525252;"></div>
<div class="a" style="left:0.00px;top:18.80px;width:16.60px;height:6.20px;background:#454545;"></div>
<span class="a t" style="top:20px;font-size:4.2px;line-height:5px;height:5px;color:#c4c4c4;left:-1.20px;transform-origin:0 50%;">«</span>
<div class="a" style="left:0.00px;top:27.00px;width:10.20px;height:2.00px;background:#474747;"></div>
<div class="a" style="left:16.00px;top:18.80px;width:0.70px;height:394.20px;background:#3e3e3e;"></div>
<div class="a" style="left:0.00px;top:34.00px;width:12.00px;height:11.00px;background:#3e3e3e;"></div>
<svg class="a" style="left:-0.20px;top:34.70px;" width="10.6" height="10.6" viewBox="0 0 11 11"><path d="M2.5 1.5 L9.5 5.6 L6 6.4 L4.2 9.6 Z" fill="none" stroke="#c2c2c2" stroke-width="1.05" stroke-linejoin="round"/></svg>
<svg class="a" style="left:-0.20px;top:47.70px;" width="10.6" height="10.6" viewBox="0 0 11 11"><path d="M2.5 1.5 L9.5 5.6 L6 6.4 L4.2 9.6 Z" fill="#a5a5a5" stroke="#a5a5a5" stroke-width="0.5"/></svg>
<svg class="a" style="left:-0.20px;top:59.70px;" width="10.6" height="10.6" viewBox="0 0 11 11"><path d="M2.5 1.5 H6.5 L8.5 3.5 V9.5 H2.5 Z" fill="none" stroke="#dcdcdc" stroke-width="1.05"/><path d="M6 6 L9.5 8 L7.5 8.5 L6.8 10.2Z" fill="#dcdcdc"/></svg>
<svg class="a" style="left:-0.20px;top:72.20px;" width="10.6" height="10.6" viewBox="0 0 11 11"><path d="M0.7 2 V9 M10.3 2 V9" fill="none" stroke="#dcdcdc" stroke-width="1.3"/><path d="M2 5.5 H9 M3.6 3.8 L1.9 5.5 L3.6 7.2 M7.4 3.8 L9.1 5.5 L7.4 7.2" fill="none" stroke="#dcdcdc" stroke-width="1.0"/></svg>
<svg class="a" style="left:-0.20px;top:85.70px;" width="10.6" height="10.6" viewBox="0 0 11 11"><path d="M1.5 5.5 V9.5 H9.5 V5.5" fill="none" stroke="#dcdcdc" stroke-width="1"/><rect x="3" y="6.8" width="5" height="2.7" fill="#dcdcdc"/><path d="M3 1.5 L5.5 4.5" stroke="#dcdcdc" stroke-width="1.2"/></svg>
<span class="a t" style="top:99px;font-size:11.5px;line-height:12px;height:12px;color:#dcdcdc;left:1.69px;transform-origin:50% 50%;font-family:'Liberation Serif',serif;">T</span>
<svg class="a" style="left:-0.20px;top:111.50px;" width="10.6" height="10.6" viewBox="0 0 11 11"><path d="M1.5 9.5 L9.5 1.5" stroke="#dcdcdc" stroke-width="1.05"/></svg>
<svg class="a" style="left:-0.20px;top:124.10px;" width="10.6" height="10.6" viewBox="0 0 11 11"><path d="M2 9.5 L3 6 L7 2 L9.2 4.2 L5.2 8.2 Z" fill="#dcdcdc"/><circle cx="5.4" cy="5.8" r="0.8" fill="#525252"/></svg>
<svg class="a" style="left:-0.20px;top:136.70px;" width="10.6" height="10.6" viewBox="0 0 11 11"><path d="M1.8 9.6 L2.6 7 L7.6 2 L9.2 3.6 L4.2 8.6 Z" fill="#dcdcdc"/></svg>
<svg class="a" style="left:-0.20px;top:149.70px;" width="10.6" height="10.6" viewBox="0 0 11 11"><rect x="1.5" y="1.8" width="8" height="7.4" fill="none" stroke="#dcdcdc" stroke-width="1.05"/><path d="M1.5 1.8 L9.5 9.2 M9.5 1.8 L1.5 9.2" stroke="#dcdcdc" stroke-width="0.7"/></svg>
<svg class="a" style="left:-0.20px;top:162.50px;" width="10.6" height="10.6" viewBox="0 0 11 11"><rect x="1.5" y="1.8" width="8" height="7.4" fill="#6e6e6e" stroke="#9a9a9a" stroke-width="1.05"/></svg>
<svg class="a" style="left:-0.20px;top:176.00px;" width="10.6" height="10.6" viewBox="0 0 11 11"><path d="M2 1.5 L7.5 8 M9 1.5 L3.5 8" stroke="#dcdcdc" stroke-width="1.05"/><circle cx="3" cy="8.7" r="1.3" fill="none" stroke="#dcdcdc" stroke-width="0.95"/><circle cx="8" cy="8.7" r="1.3" fill="none" stroke="#dcdcdc" stroke-width="0.95"/></svg>
<svg class="a" style="left:-0.20px;top:188.70px;" width="10.6" height="10.6" viewBox="0 0 11 11"><rect x="3" y="2.5" width="6.5" height="6.5" fill="none" stroke="#dcdcdc" stroke-width="0.95" stroke-dasharray="1.2 0.8"/><path d="M0.5 3 L4.5 5.5 L0.5 8 Z" fill="#dcdcdc"/></svg>
<div class="a" style="left:1px;top:203.4px;width:6.8px;height:7.2px;background:linear-gradient(90deg,#e4e4e4,#3a3a3a);"></div>
<div class="a" style="left:1px;top:216.2px;width:7px;height:7.6px;background:linear-gradient(180deg,#bdbdbd,#7a7a7a);border:0.6px solid #b4b4b4;box-sizing:border-box"></div>
<svg class="a" style="left:-0.20px;top:228.30px;" width="10.6" height="10.6" viewBox="0 0 11 11"><rect x="1.5" y="1.5" width="8" height="8" rx="0.8" fill="#dcdcdc"/><path d="M3 4 H8 M3 6 H8" stroke="#525252" stroke-width="0.7"/></svg>
<svg class="a" style="left:-0.20px;top:240.90px;" width="10.6" height="10.6" viewBox="0 0 11 11"><path d="M1.5 9.5 L2 7.5 L6.5 3 L8 4.5 L3.5 9 Z" fill="none" stroke="#dcdcdc" stroke-width="0.95"/><path d="M6.2 2 L9 4.8 M7.5 3.2 L9.3 1.5" stroke="#dcdcdc" stroke-width="1.6"/></svg>
<svg class="a" style="left:-0.20px;top:253.50px;" width="10.6" height="10.6" viewBox="0 0 11 11"><path d="M2.5 6 L1.5 4.5 M3.5 5 V2.2 M5 4.8 V1.5 M6.6 5 V2 M8 5.5 V3" stroke="#dcdcdc" stroke-width="1.1" stroke-linecap="round"/><path d="M2.5 5 H8.5 V7.5 Q8 10 5.5 10 Q3.5 10 2.5 7.5Z" fill="#dcdcdc"/></svg>
<svg class="a" style="left:-0.20px;top:267.60px;" width="10.6" height="10.6" viewBox="0 0 11 11"><circle cx="4.5" cy="4.5" r="3" fill="none" stroke="#dcdcdc" stroke-width="1.05"/><path d="M6.8 6.8 L10 10" stroke="#dcdcdc" stroke-width="1.1"/></svg>
<svg class="a" style="left:4.50px;top:280.50px;" width="8" height="8" viewBox="0 0 11 11"><path d="M2 3 Q6 1 6.5 6 M5 5 L6.5 6.5 L8 5" fill="none" stroke="#dcdcdc" stroke-width="1.05"/></svg>
<svg class="a" style="left:-2.00px;top:281.00px;" width="7" height="7" viewBox="0 0 11 11"><rect x="2" y="4" width="5" height="5" fill="#ddd" stroke="#222" stroke-width="0.95"/></svg>
<div class="a" style="left:2.30px;top:295.00px;width:9.80px;height:9.80px;background:#000;"></div>
<div class="a" style="left:4.80px;top:297.60px;width:4.80px;height:4.80px;background:#535353;"></div>
<svg class="a" style="left:0.00px;top:289.30px;" width="7.6" height="9.8" viewBox="0 0 7.6 9.8"><rect width="7.6" height="9.8" fill="#fff"/><path d="M0 9.8 L7.6 0" stroke="#e8141e" stroke-width="1.3"/></svg>
<div class="a" style="left:0.50px;top:309.50px;width:3.50px;height:5.00px;background:#8a8a8a;border:0.6px solid #b0b0b0;box-sizing:border-box;"></div>
<span class="a t" style="top:308px;font-size:6.5px;line-height:7px;height:7px;color:#dcdcdc;font-weight:bold;left:6.51px;transform-origin:50% 50%;font-family:'Liberation Serif',serif;">T</span>
<div class="a" style="left:0.00px;top:320.00px;width:11.00px;height:9.50px;background:#3c3c3c;"></div>
<svg class="a" style="left:0.30px;top:321.00px;" width="8" height="7.5" viewBox="0 0 8 7.5"><rect width="8" height="7.5" fill="#fff"/><path d="M0 7.5 L8 0" stroke="#e8141e" stroke-width="1.2"/></svg>
<svg class="a" style="left:0.10px;top:334.80px;" width="10" height="10" viewBox="0 0 11 11"><rect x="2" y="3.5" width="7.5" height="5.5" fill="#dcdcdc"/><rect x="3" y="2" width="5.5" height="1" fill="#9a9a9a"/></svg>
<div class="a" style="left:0.00px;top:349.50px;width:12.30px;height:9.80px;background:#3c3c3c;"></div>
<svg class="a" style="left:0.50px;top:349.30px;" width="10" height="10" viewBox="0 0 11 11"><rect x="2" y="2" width="7" height="7" fill="#9a9a9a"/><rect x="3.2" y="3.2" width="4.6" height="4.6" fill="#777"/></svg>
<div class="a" style="left:10.60px;top:95.50px;width:1.00px;height:1.00px;background:#c0c0c0;"></div>
<div class="a" style="left:10.60px;top:108.50px;width:1.00px;height:1.00px;background:#c0c0c0;"></div>
<div class="a" style="left:10.60px;top:134.00px;width:1.00px;height:1.00px;background:#c0c0c0;"></div>
<div class="a" style="left:10.60px;top:146.50px;width:1.00px;height:1.00px;background:#c0c0c0;"></div>
<div class="a" style="left:10.60px;top:159.50px;width:1.00px;height:1.00px;background:#c0c0c0;"></div>
<div class="a" style="left:10.60px;top:172.50px;width:1.00px;height:1.00px;background:#c0c0c0;"></div>
<div class="a" style="left:10.60px;top:251.00px;width:1.00px;height:1.00px;background:#c0c0c0;"></div>
<div class="a" style="left:10.60px;top:331.00px;width:1.00px;height:1.00px;background:#c0c0c0;"></div>
<div class="a" style="left:10.60px;top:358.50px;width:1.00px;height:1.00px;background:#c0c0c0;"></div>
<div class="a" style="left:640.00px;top:34.50px;width:8.80px;height:378.50px;background:#484848;"></div>
<div class="a" style="left:641.20px;top:330.50px;width:6.20px;height:49.00px;background:#6c6c6c;border-radius:3.1px;"></div>
<svg class="a" style="left:641.50px;top:37.00px;" width="5" height="2.8" viewBox="0 0 5 2.8"><path d="M0.5 2.3 L2.5 0.5 L4.5 2.3" fill="none" stroke="#a0a0a0" stroke-width="0.7"/></svg>
<div class="a" style="left:0.00px;top:0.00px;width:800.00px;height:18.80px;background:#525252;"></div>
<div class="a" style="left:0.00px;top:0.80px;width:16.00px;height:16.80px;background:#49021f;border-radius:3px;"></div>
<span class="a t" style="top:3px;font-size:11px;line-height:12px;height:12px;color:#ff3f70;font-weight:bold;left:3.11px;transform-origin:50% 50%;">Id</span>
<svg class="a" style="left:25.00px;top:5.00px;" width="11" height="10" viewBox="0 0 11 10"><path d="M5.5 0.6 L0.4 5 H1.8 V9.5 H4.4 V6.4 H6.6 V9.5 H9.2 V5 H10.6 Z" fill="#e6e6e6"/></svg>
<span class="a t" style="top:6px;font-size:6.6px;line-height:7px;height:7px;color:#dedede;left:46.10px;transform-origin:0 50%;transform:scaleX(0.980);">Datei</span>
<span class="a t" style="top:6px;font-size:6.6px;line-height:7px;height:7px;color:#dedede;left:69.70px;transform-origin:0 50%;transform:scaleX(0.946);">Bearbeiten</span>
<span class="a t" style="top:6px;font-size:6.6px;line-height:7px;height:7px;color:#dedede;left:109.00px;transform-origin:0 50%;transform:scaleX(0.959);">Layout</span>
<span class="a t" style="top:6px;font-size:6.6px;line-height:7px;height:7px;color:#dedede;left:137.00px;transform-origin:0 50%;transform:scaleX(0.962);">Schrift</span>
<span class="a t" style="top:6px;font-size:6.6px;line-height:7px;height:7px;color:#dedede;left:163.60px;transform-origin:0 50%;transform:scaleX(0.991);">Objekt</span>
<span class="a t" style="top:6px;font-size:6.6px;line-height:7px;height:7px;color:#dedede;left:192.00px;transform-origin:0 50%;transform:scaleX(0.980);">Tabelle</span>
<span class="a t" style="top:6px;font-size:6.6px;line-height:7px;height:7px;color:#dedede;left:220.50px;transform-origin:0 50%;transform:scaleX(1.016);">Ansicht</span>
<span class="a t" style="top:6px;font-size:6.6px;line-height:7px;height:7px;color:#dedede;left:250.50px;transform-origin:0 50%;transform:scaleX(0.965);">Plug-ins</span>
<span class="a t" style="top:6px;font-size:6.6px;line-height:7px;height:7px;color:#dedede;left:282.50px;transform-origin:0 50%;transform:scaleX(0.939);">Fenster</span>
<span class="a t" style="top:6px;font-size:6.6px;line-height:7px;height:7px;color:#dedede;left:312.50px;transform-origin:0 50%;transform:scaleX(1.022);">Hilfe</span>
<div class="a" style="left:564.40px;top:3.30px;width:40.60px;height:12.30px;background:#1473e6;border-radius:6.2px;"></div>
<span class="a t" style="top:6px;font-size:6.3px;line-height:7px;height:7px;color:#fff;left:570.52px;transform-origin:50% 50%;">Freigeben</span>
<span class="a t" style="top:6px;font-size:6.6px;line-height:7px;height:7px;color:#dedede;left:617.00px;transform-origin:0 50%;transform:scaleX(0.971);">Grundlagen</span>
<svg class="a" style="left:654.50px;top:8.30px;" width="6" height="4" viewBox="0 0 6 4"><path d="M1 0.8 L3 2.9 L5 0.8" fill="none" stroke="#dedede" stroke-width="0.9"/></svg>
<div class="a" style="left:665.30px;top:3.00px;width:0.60px;height:13.50px;background:#444;"></div>
<div class="a" style="left:671.60px;top:4.20px;width:67.80px;height:10.20px;background:#414141;border:0.7px solid #686868;box-sizing:border-box;border-radius:1.6px;"></div>
<svg class="a" style="left:674.50px;top:6.00px;" width="9" height="7" viewBox="0 0 9 7"><circle cx="3" cy="3" r="2.1" fill="none" stroke="#5d9cf0" stroke-width="0.9"/><path d="M4.6 4.6 L6.6 6.4" stroke="#5d9cf0" stroke-width="0.9"/><path d="M6.8 2.8 L7.8 3.8 L8.8 2.8" fill="none" stroke="#5d9cf0" stroke-width="0.6"/></svg>
<span class="a t" style="top:6px;font-size:5.8px;line-height:6px;height:6px;color:#8e8e8e;left:684.60px;transform-origin:0 50%;transform:scaleX(0.985);">Adobe Stock</span>
<div class="a" style="left:748.00px;top:0.00px;width:52.00px;height:9.40px;border:0.6px solid #5c5c5c;box-sizing:border-box;"></div>
<div class="a" style="left:763.60px;top:0.00px;width:0.60px;height:9.40px;background:#5c5c5c;"></div>
<div class="a" style="left:778.00px;top:0.00px;width:0.60px;height:9.40px;background:#5c5c5c;"></div>
<div class="a" style="left:752.50px;top:5.50px;width:5.60px;height:1.00px;background:#d4d4d4;"></div>
<svg class="a" style="left:767.00px;top:2.00px;" width="7.2" height="6.4" viewBox="0 0 7.2 6.4"><rect x="0.5" y="1.9" width="4.6" height="4" fill="none" stroke="#d4d4d4" stroke-width="0.9"/><path d="M2.1 1.9 V0.5 H6.7 V4.4 H5.1" fill="none" stroke="#d4d4d4" stroke-width="0.9"/></svg>
<svg class="a" style="left:787.40px;top:2.60px;" width="5" height="4.8" viewBox="0 0 5 4.8"><path d="M0.5 0.5 L4.5 4.3 M4.5 0.5 L0.5 4.3" stroke="#d4d4d4" stroke-width="0.9"/></svg>
<div class="a" style="left:16.60px;top:18.80px;width:632.00px;height:15.70px;background:#454545;"></div>
<div class="a" style="left:535.40px;top:18.80px;width:93.00px;height:15.70px;background:#525252;"></div>
<span class="a t" style="top:24px;font-size:6.0px;line-height:6px;height:6px;color:#c4c4c4;font-weight:bold;left:16.80px;transform-origin:0 50%;transform:scaleX(1.011);">nbenannt-26 @ 63 %</span>
<svg class="a" style="left:79.60px;top:24.80px;" width="4.4" height="4.4" viewBox="0 0 5 5"><path d="M0.7 0.7 L4.3 4.3 M4.3 0.7 L0.7 4.3" stroke="#b4b4b4" stroke-width="0.9"/></svg>
<span class="a t" style="top:24px;font-size:6.0px;line-height:6px;height:6px;color:#c4c4c4;font-weight:bold;left:98.40px;transform-origin:0 50%;">*Unbenannt-27 @ 89 %</span>
<svg class="a" style="left:167.10px;top:24.80px;" width="4.4" height="4.4" viewBox="0 0 5 5"><path d="M0.7 0.7 L4.3 4.3 M4.3 0.7 L0.7 4.3" stroke="#b4b4b4" stroke-width="0.9"/></svg>
<span class="a t" style="top:24px;font-size:6.0px;line-height:6px;height:6px;color:#c4c4c4;font-weight:bold;left:187.00px;transform-origin:0 50%;">*Unbenannt-28 @ 89 %</span>
<svg class="a" style="left:255.60px;top:24.80px;" width="4.4" height="4.4" viewBox="0 0 5 5"><path d="M0.7 0.7 L4.3 4.3 M4.3 0.7 L0.7 4.3" stroke="#b4b4b4" stroke-width="0.9"/></svg>
<span class="a t" style="top:24px;font-size:6.0px;line-height:6px;height:6px;color:#c4c4c4;font-weight:bold;left:276.00px;transform-origin:0 50%;">*Unbenannt-29 @ 63 %</span>
<svg class="a" style="left:344.60px;top:24.80px;" width="4.4" height="4.4" viewBox="0 0 5 5"><path d="M0.7 0.7 L4.3 4.3 M4.3 0.7 L0.7 4.3" stroke="#b4b4b4" stroke-width="0.9"/></svg>
<span class="a t" style="top:24px;font-size:6.0px;line-height:6px;height:6px;color:#c4c4c4;font-weight:bold;left:364.50px;transform-origin:0 50%;">*Unbenannt-30 @ 63 %</span>
<svg class="a" style="left:433.10px;top:24.80px;" width="4.4" height="4.4" viewBox="0 0 5 5"><path d="M0.7 0.7 L4.3 4.3 M4.3 0.7 L0.7 4.3" stroke="#b4b4b4" stroke-width="0.9"/></svg>
<span class="a t" style="top:24px;font-size:6.0px;line-height:6px;height:6px;color:#c4c4c4;font-weight:bold;left:454.00px;transform-origin:0 50%;">*Unbenannt-31 @ 63 %</span>
<svg class="a" style="left:522.60px;top:24.80px;" width="4.4" height="4.4" viewBox="0 0 5 5"><path d="M0.7 0.7 L4.3 4.3 M4.3 0.7 L0.7 4.3" stroke="#b4b4b4" stroke-width="0.9"/></svg>
<span class="a t" style="top:24px;font-size:6.0px;line-height:6px;height:6px;color:#ffffff;font-weight:bold;left:544.00px;transform-origin:0 50%;transform:scaleX(1.007);">*Unbenannt-32 @ 100 %</span>
<svg class="a" style="left:616.60px;top:24.80px;" width="4.4" height="4.4" viewBox="0 0 5 5"><path d="M0.7 0.7 L4.3 4.3 M4.3 0.7 L0.7 4.3" stroke="#e0e0e0" stroke-width="0.9"/></svg>
<div class="a" style="left:91.40px;top:19.50px;width:0.70px;height:15.00px;background:#383838;"></div>
<div class="a" style="left:180.00px;top:19.50px;width:0.70px;height:15.00px;background:#383838;"></div>
<div class="a" style="left:268.70px;top:19.50px;width:0.70px;height:15.00px;background:#383838;"></div>
<div class="a" style="left:357.40px;top:19.50px;width:0.70px;height:15.00px;background:#383838;"></div>
<div class="a" style="left:446.00px;top:19.50px;width:0.70px;height:15.00px;background:#383838;"></div>
<div class="a" style="left:534.80px;top:19.50px;width:0.70px;height:15.00px;background:#383838;"></div>
<svg class="a" style="left:639.60px;top:24.80px;" width="5.6" height="4.4" viewBox="0 0 5.6 4.4"><path d="M0.5 0.4 L2.4 2.2 L0.5 4 M3 0.4 L4.9 2.2 L3 4" fill="none" stroke="#d6d6d6" stroke-width="0.8"/></svg>
<div class="a" style="left:648.60px;top:18.80px;width:151.40px;height:394.20px;background:#444444;"></div>
<div class="a" style="left:648.60px;top:18.80px;width:0.80px;height:394.20px;background:#3c3c3c;"></div>
<div class="a" style="left:649.20px;top:24.80px;width:20.10px;height:388.20px;background:#525252;"></div>
<div class="a" style="left:648.80px;top:46.40px;width:20.50px;height:1.00px;background:#3f3f3f;"></div>
<div class="a" style="left:653.70px;top:27.20px;width:10.10px;height:2.00px;background:#474747;"></div>
<svg class="a" style="left:654.50px;top:31.50px;" width="10" height="11" viewBox="0 0 10 11"><rect x="1" y="1" width="2.6" height="8.5" fill="none" stroke="#cfcfcf" stroke-width="0.8"/><rect x="1.6" y="3" width="1.4" height="1.4" fill="#cfcfcf"/><rect x="1.6" y="6" width="1.4" height="1.4" fill="#cfcfcf"/><path d="M5.5 2 Q8.5 2 8 5.5 Q7.6 7.5 5.8 8" fill="none" stroke="#cfcfcf" stroke-width="0.9"/><path d="M5 1 L6.8 2.2 L5 3.4Z" fill="#cfcfcf"/></svg>
<div class="a" style="left:670.40px;top:24.80px;width:129.60px;height:388.20px;background:#525252;"></div>
<div class="a" style="left:670.40px;top:24.80px;width:129.60px;height:14.80px;background:#454545;"></div>
<div class="a" style="left:670.40px;top:24.80px;width:51.40px;height:15.00px;background:#525252;"></div>
<div class="a" style="left:748.00px;top:25.60px;width:0.60px;height:14.00px;background:#3b3b3b;"></div>
<div class="a" style="left:785.60px;top:25.60px;width:0.60px;height:14.00px;background:#3b3b3b;"></div>
<span class="a t" style="top:29px;font-size:6.2px;line-height:7px;height:7px;color:#ffffff;font-weight:bold;left:676.80px;transform-origin:0 50%;transform:scaleX(0.925);">Eigenschaften</span>
<span class="a t" style="top:29px;font-size:6.2px;line-height:7px;height:7px;color:#c8c8c8;font-weight:bold;left:728.40px;transform-origin:0 50%;transform:scaleX(0.935);">Seiten</span>
<span class="a t" style="top:29px;font-size:6.2px;line-height:7px;height:7px;color:#c8c8c8;font-weight:bold;left:755.00px;transform-origin:0 50%;transform:scaleX(0.898);">CC Librarie</span>
<span class="a t" style="top:20px;font-size:4.5px;line-height:5px;height:5px;color:#bbb;left:661.75px;transform-origin:50% 50%;">«</span>
<span class="a t" style="top:20px;font-size:4.5px;line-height:5px;height:5px;color:#bbb;left:794.25px;transform-origin:50% 50%;">»</span>
<span class="a t" style="top:46px;font-size:6.0px;line-height:6px;height:6px;color:#dedede;left:675.70px;transform-origin:0 50%;transform:scaleX(0.864);">Keine Auswahl</span>
<div class="a" style="left:670.40px;top:57.20px;width:129.60px;height:0.80px;background:#484848;"></div>
<div class="a" style="left:670.40px;top:181.00px;width:129.60px;height:0.80px;background:#484848;"></div>
<div class="a" style="left:670.40px;top:227.20px;width:129.60px;height:0.80px;background:#484848;"></div>
<div class="a" style="left:670.40px;top:248.80px;width:129.60px;height:0.80px;background:#484848;"></div>
<div class="a" style="left:670.40px;top:269.60px;width:129.60px;height:0.80px;background:#484848;"></div>
<span class="a t" style="top:64px;font-size:6.0px;line-height:6px;height:6px;color:#dedede;left:675.70px;transform-origin:0 50%;transform:scaleX(0.870);">Dokument</span>
<div class="a" style="left:675.40px;top:75.40px;width:49.10px;height:10.60px;background:#454545;border:0.7px solid #6a6a6a;box-sizing:border-box;border-radius:1.2px;"></div>
<div class="a" style="left:715.40px;top:75.40px;width:9.10px;height:10.60px;background:#505050;border:0.7px solid #6a6a6a;box-sizing:border-box;border-radius:0 1.2px 1.2px 0;"></div>
<span class="a t" style="top:78px;font-size:5.8px;line-height:6px;height:6px;color:#dedede;left:677.80px;transform-origin:0 50%;transform:scaleX(0.930);">[Benutzerdef...</span>
<svg class="a" style="left:717.50px;top:79.50px;" width="5" height="3" viewBox="0 0 5 3"><path d="M0.6 0.5 L2.5 2.4 L4.4 0.5" fill="none" stroke="#cfcfcf" stroke-width="0.8"/></svg>
<div class="a" style="left:742.40px;top:75.00px;width:11.30px;height:11.50px;background:#2e2e2e;border:0.7px solid #7a7a7a;box-sizing:border-box;border-radius:1.4px;"></div>
<svg class="a" style="left:744.80px;top:76.80px;" width="6.6" height="8.2" viewBox="0 0 6.6 8.2"><rect x="0.3" y="0.3" width="6" height="7.6" fill="#dcdcdc"/><circle cx="3.3" cy="2.7" r="1.2" fill="#2e2e2e"/><path d="M1.6 7.9 V5.4 Q1.6 4.3 3.3 4.3 Q5 4.3 5 5.4 V7.9 Z" fill="#2e2e2e"/></svg>
<svg class="a" style="left:757.80px;top:77.00px;" width="8.2" height="9" viewBox="0 0 8.2 9"><rect x="0.4" y="0.4" width="7.4" height="8.2" fill="none" stroke="#cfcfcf" stroke-width="0.8"/><circle cx="3.0" cy="4.5" r="1.1" fill="#dcdcdc"/><path d="M7.8 2.8 H5.6 Q4.6 2.8 4.6 4.5 Q4.6 6.2 5.6 6.2 H7.8 Z" fill="#dcdcdc"/></svg>
<span class="a t" style="top:95px;font-size:5.8px;line-height:6px;height:6px;color:#dedede;left:679.30px;transform-origin:0 50%;transform:scaleX(0.858);">B:</span>
<div class="a" style="left:686.20px;top:92.60px;width:9.20px;height:10.50px;background:#454545;border:0.7px solid #6a6a6a;box-sizing:border-box;border-radius:1.2px 0 0 1.2px;"></div>
<svg class="a" style="left:688.30px;top:94.10px;" width="5" height="7.5" viewBox="0 0 5 7.50"><path d="M0.8 2.5 L2.5 0.8 L4.2 2.5 M0.8 5.00 L2.5 6.70 L4.2 5.00" fill="none" stroke="#c4c4c4" stroke-width="0.75"/></svg>
<div class="a" style="left:695.00px;top:92.60px;width:29.50px;height:10.50px;background:#454545;border:0.7px solid #6a6a6a;box-sizing:border-box;border-radius:0 1.2px 1.2px 0;"></div>
<span class="a t" style="top:95px;font-size:5.8px;line-height:6px;height:6px;color:#dedede;left:698.00px;transform-origin:0 50%;transform:scaleX(0.935);">595,5 Pt</span>
<span class="a t" style="top:109px;font-size:5.8px;line-height:6px;height:6px;color:#dedede;left:679.30px;transform-origin:0 50%;transform:scaleX(0.810);">H:</span>
<div class="a" style="left:686.20px;top:106.60px;width:9.20px;height:10.50px;background:#454545;border:0.7px solid #6a6a6a;box-sizing:border-box;border-radius:1.2px 0 0 1.2px;"></div>
<svg class="a" style="left:688.30px;top:108.10px;" width="5" height="7.5" viewBox="0 0 5 7.50"><path d="M0.8 2.5 L2.5 0.8 L4.2 2.5 M0.8 5.00 L2.5 6.70 L4.2 5.00" fill="none" stroke="#c4c4c4" stroke-width="0.75"/></svg>
<div class="a" style="left:695.00px;top:106.60px;width:29.50px;height:10.50px;background:#454545;border:0.7px solid #6a6a6a;box-sizing:border-box;border-radius:0 1.2px 1.2px 0;"></div>
<span class="a t" style="top:109px;font-size:5.8px;line-height:6px;height:6px;color:#dedede;left:698.00px;transform-origin:0 50%;transform:scaleX(0.914);">842,25 Pt</span>
<svg class="a" style="left:741.50px;top:91.70px;" width="10" height="11" viewBox="0 0 10 11"><path d="M4.5 2.2 V10.4 L0.5 9.4 V3.4 Z M5.5 2.2 V10.4 L9.5 9.4 V3.4 Z" fill="#d4d4d4"/><path d="M5 0.4 V10.8" stroke="#d4d4d4" stroke-width="0.6"/></svg>
<div class="a" style="left:754.50px;top:92.60px;width:36.10px;height:10.80px;background:#434343;border:0.7px solid #6a6a6a;box-sizing:border-box;border-radius:1.2px;"></div>
<span class="a t" style="top:95px;font-size:5.8px;line-height:6px;height:6px;color:#dedede;left:757.60px;transform-origin:0 50%;">4</span>
<div class="a" style="left:742.70px;top:109.20px;width:6.50px;height:6.60px;background:#4a4a4a;border:0.7px solid #9c9c9c;box-sizing:border-box;border-radius:1px;"></div>
<span class="a t" style="top:110px;font-size:5.8px;line-height:6px;height:6px;color:#dedede;left:752.20px;transform-origin:0 50%;transform:scaleX(0.901);">Doppelseite</span>
<span class="a t" style="top:124px;font-size:6.0px;line-height:6px;height:6px;color:#dedede;left:675.70px;transform-origin:0 50%;transform:scaleX(0.844);">Ränder</span>
<div class="a" style="left:686.20px;top:134.30px;width:9.20px;height:10.50px;background:#454545;border:0.7px solid #6a6a6a;box-sizing:border-box;border-radius:1.2px 0 0 1.2px;"></div>
<svg class="a" style="left:688.30px;top:135.80px;" width="5" height="7.5" viewBox="0 0 5 7.50"><path d="M0.8 2.5 L2.5 0.8 L4.2 2.5 M0.8 5.00 L2.5 6.70 L4.2 5.00" fill="none" stroke="#c4c4c4" stroke-width="0.75"/></svg>
<div class="a" style="left:695.00px;top:134.30px;width:29.50px;height:10.50px;background:#454545;border:0.7px solid #6a6a6a;box-sizing:border-box;border-radius:0 1.2px 1.2px 0;"></div>
<span class="a t" style="top:137px;font-size:5.8px;line-height:6px;height:6px;color:#dedede;left:698.00px;transform-origin:0 50%;transform:scaleX(0.908);">36 Pt</span>
<div class="a" style="left:753.00px;top:134.30px;width:9.20px;height:10.50px;background:#454545;border:0.7px solid #6a6a6a;box-sizing:border-box;border-radius:1.2px 0 0 1.2px;"></div>
<svg class="a" style="left:755.10px;top:135.80px;" width="5" height="7.5" viewBox="0 0 5 7.50"><path d="M0.8 2.5 L2.5 0.8 L4.2 2.5 M0.8 5.00 L2.5 6.70 L4.2 5.00" fill="none" stroke="#c4c4c4" stroke-width="0.75"/></svg>
<div class="a" style="left:761.80px;top:134.30px;width:29.30px;height:10.50px;background:#454545;border:0.7px solid #6a6a6a;box-sizing:border-box;border-radius:0 1.2px 1.2px 0;"></div>
<span class="a t" style="top:137px;font-size:5.8px;line-height:6px;height:6px;color:#dedede;left:764.90px;transform-origin:0 50%;transform:scaleX(0.893);">36 Pt</span>
<div class="a" style="left:686.20px;top:148.10px;width:9.20px;height:10.50px;background:#454545;border:0.7px solid #6a6a6a;box-sizing:border-box;border-radius:1.2px 0 0 1.2px;"></div>
<svg class="a" style="left:688.30px;top:149.60px;" width="5" height="7.5" viewBox="0 0 5 7.50"><path d="M0.8 2.5 L2.5 0.8 L4.2 2.5 M0.8 5.00 L2.5 6.70 L4.2 5.00" fill="none" stroke="#c4c4c4" stroke-width="0.75"/></svg>
<div class="a" style="left:695.00px;top:148.10px;width:29.50px;height:10.50px;background:#454545;border:0.7px solid #6a6a6a;box-sizing:border-box;border-radius:0 1.2px 1.2px 0;"></div>
<span class="a t" style="top:151px;font-size:5.8px;line-height:6px;height:6px;color:#dedede;left:698.00px;transform-origin:0 50%;transform:scaleX(0.908);">36 Pt</span>
<div class="a" style="left:753.00px;top:148.10px;width:9.20px;height:10.50px;background:#454545;border:0.7px solid #6a6a6a;box-sizing:border-box;border-radius:1.2px 0 0 1.2px;"></div>
<svg class="a" style="left:755.10px;top:149.60px;" width="5" height="7.5" viewBox="0 0 5 7.50"><path d="M0.8 2.5 L2.5 0.8 L4.2 2.5 M0.8 5.00 L2.5 6.70 L4.2 5.00" fill="none" stroke="#c4c4c4" stroke-width="0.75"/></svg>
<div class="a" style="left:761.80px;top:148.10px;width:29.30px;height:10.50px;background:#454545;border:0.7px solid #6a6a6a;box-sizing:border-box;border-radius:0 1.2px 1.2px 0;"></div>
<span class="a t" style="top:151px;font-size:5.8px;line-height:6px;height:6px;color:#dedede;left:764.90px;transform-origin:0 50%;transform:scaleX(0.893);">36 Pt</span>
<svg class="a" style="left:675.70px;top:135.00px;" width="9.4" height="9" viewBox="0 0 9.4 9"><rect x="0.4" y="0.4" width="8.6" height="2.4" fill="#d4d4d4"/><rect x="0.4" y="4" width="8.6" height="4.6" fill="none" stroke="#d4d4d4" stroke-width="0.8"/></svg>
<svg class="a" style="left:675.70px;top:148.80px;" width="9.4" height="9" viewBox="0 0 9.4 9"><rect x="0.4" y="0.4" width="8.6" height="4.6" fill="none" stroke="#d4d4d4" stroke-width="0.8"/><rect x="0.4" y="6.2" width="8.6" height="2.4" fill="#d4d4d4"/></svg>
<svg class="a" style="left:742.00px;top:135.00px;" width="9.4" height="9" viewBox="0 0 9.4 9"><rect x="0.4" y="0.4" width="2.6" height="8.2" fill="#d4d4d4"/><rect x="4.4" y="0.4" width="4.6" height="8.2" fill="none" stroke="#d4d4d4" stroke-width="0.8"/></svg>
<svg class="a" style="left:742.00px;top:148.80px;" width="9.4" height="9" viewBox="0 0 9.4 9"><rect x="0.4" y="0.4" width="4.6" height="8.2" fill="none" stroke="#d4d4d4" stroke-width="0.8"/><rect x="6.4" y="0.4" width="2.6" height="8.2" fill="#d4d4d4"/></svg>
<svg class="a" style="left:730.40px;top:141.60px;" width="7" height="8.4" viewBox="0 0 7 8.4"><path d="M2.2 3.4 V2.2 Q2.2 0.6 3.6 0.6 Q5 0.6 5 2.2 V3.2 M2.2 5 V6.2 Q2.2 7.8 3.6 7.8 Q5 7.8 5 6.2 V5.2 M0.8 1.4 L6.2 7.2" fill="none" stroke="#cccccc" stroke-width="0.8"/></svg>
<div class="a" style="left:675.40px;top:166.80px;width:116.20px;height:10.90px;border:0.7px solid #626262;box-sizing:border-box;border-radius:2px;"></div>
<span class="a t" style="top:170px;font-size:5.9px;line-height:6px;height:6px;color:#e2e2e2;left:713.00px;transform-origin:0 50%;transform:scaleX(0.897);">Layout anpassen</span>
<span class="a t" style="top:188px;font-size:6.0px;line-height:6px;height:6px;color:#dedede;left:675.70px;transform-origin:0 50%;transform:scaleX(0.826);">Seite</span>
<div class="a" style="left:675.40px;top:198.00px;width:49.10px;height:10.50px;background:#454545;border:0.7px solid #6a6a6a;box-sizing:border-box;border-radius:1.2px;"></div>
<div class="a" style="left:715.40px;top:198.00px;width:9.10px;height:10.50px;background:#505050;border:0.7px solid #6a6a6a;box-sizing:border-box;border-radius:0 1.2px 1.2px 0;"></div>
<span class="a t" style="top:200px;font-size:5.8px;line-height:6px;height:6px;color:#dedede;left:677.40px;transform-origin:0 50%;">4</span>
<svg class="a" style="left:717.50px;top:201.90px;" width="5" height="3" viewBox="0 0 5 3"><path d="M0.6 0.5 L2.5 2.4 L4.4 0.5" fill="none" stroke="#cfcfcf" stroke-width="0.8"/></svg>
<svg class="a" style="left:766.00px;top:200.90px;" width="6.8" height="6.2" viewBox="0 0 6.8 6.2"><rect x="0.4" y="0.4" width="6" height="5.4" fill="none" stroke="#b4b4b4" stroke-width="0.75"/><path d="M3.4 1.7 V4.5 M2 3.1 H4.8" stroke="#b4b4b4" stroke-width="0.75"/></svg>
<svg class="a" style="left:780.50px;top:200.60px;" width="6.4" height="6.8" viewBox="0 0 6.4 6.8"><path d="M0.4 1.3 H6 M2.2 1.3 V0.4 H4.2 V1.3" fill="none" stroke="#929292" stroke-width="0.8"/><path d="M0.9 2 H5.5 V6.4 H0.9 Z" fill="#929292"/></svg>
<div class="a" style="left:675.40px;top:213.30px;width:116.20px;height:10.50px;border:0.7px solid #626262;box-sizing:border-box;border-radius:2px;"></div>
<span class="a t" style="top:216px;font-size:5.9px;line-height:6px;height:6px;color:#e2e2e2;left:713.60px;transform-origin:0 50%;transform:scaleX(0.889);">Seite bearbeiten</span>
<span class="a t" style="top:236px;font-size:6.0px;line-height:6px;height:6px;color:#dedede;left:675.70px;transform-origin:0 50%;transform:scaleX(0.865);">Lineale und Raster</span>
<span class="a t" style="top:257px;font-size:6.0px;line-height:6px;height:6px;color:#dedede;left:675.70px;transform-origin:0 50%;transform:scaleX(0.868);">Hilfslinien</span>
<div class="a" style="left:739.20px;top:232.80px;width:11.90px;height:11.70px;background:#303030;border:0.6px solid #3c3c3c;box-sizing:border-box;border-radius:1.8px;"></div>
<svg class="a" style="left:740.60px;top:234.20px;" width="9" height="9" viewBox="0 0 9 9"><rect x="0.3" y="0.3" width="8.4" height="8.4" fill="#333" stroke="#bdbdbd" stroke-width="0.6"/><rect x="0.3" y="0.3" width="8.4" height="2.1" fill="#c6c6c6"/><rect x="0.3" y="0.3" width="2.3" height="8.4" fill="#c6c6c6"/><path d="M3.6 1.4 H4.2 M5.2 1.4 H5.8 M6.8 1.4 H7.4 M1.3 3.6 V4.2 M1.3 5.4 V6 M1.3 7 V7.6" stroke="#555" stroke-width="0.6"/></svg>
<svg class="a" style="left:761.40px;top:234.20px;" width="9" height="9" viewBox="0 0 9 9"><rect x="0.4" y="0.4" width="9.4" height="8.6" fill="none" stroke="#d0d0d0" stroke-width="0.8"/><rect x="1.9" y="1.9" width="6.4" height="5.6" fill="#777" stroke="#d0d0d0" stroke-width="0.6"/><path d="M1.9 3.8 H8.3 M1.9 5.6 H8.3" stroke="#9a9a9a" stroke-width="0.5"/></svg>
<svg class="a" style="left:781.10px;top:234.20px;" width="9" height="9" viewBox="0 0 9 9"><rect x="0.4" y="0.4" width="9" height="8.6" fill="none" stroke="#d8d8d8" stroke-width="0.9"/><path d="M3.4 0.4 V9 M6.4 0.4 V9 M0.4 3.3 H9.4 M0.4 6.1 H9.4" stroke="#d8d8d8" stroke-width="0.75"/></svg>
<div class="a" style="left:739.20px;top:253.80px;width:11.90px;height:11.70px;background:#303030;border:0.6px solid #3c3c3c;box-sizing:border-box;border-radius:1.8px;"></div>
<svg class="a" style="left:740.60px;top:255.20px;" width="9" height="9" viewBox="0 0 9 9"><path d="M3.2 0.8 V8.6 M1 3.2 H8.4 M1 6.3 H8.4" stroke="#dcdcdc" stroke-width="0.75"/><path d="M4.2 0.8 V8.6" stroke="#8a8a8a" stroke-width="0.5"/></svg>
<div class="a" style="left:759.30px;top:253.80px;width:11.90px;height:11.70px;background:#303030;border:0.6px solid #3c3c3c;box-sizing:border-box;border-radius:1.8px;"></div>
<svg class="a" style="left:760.70px;top:255.20px;" width="9" height="9" viewBox="0 0 9 9"><path d="M3.2 0.8 V8.6 M1 3.2 H8.4 M1 6.3 H5" stroke="#dcdcdc" stroke-width="0.75"/><path d="M4.2 0.8 V8.6" stroke="#8a8a8a" stroke-width="0.5"/><rect x="5.4" y="6.2" width="3.4" height="2.4" fill="#dcdcdc"/><path d="M6 6.2 V5.4 Q6 4.6 7.1 4.6 Q8.2 4.6 8.2 5.4 V6.2" fill="none" stroke="#dcdcdc" stroke-width="0.5"/></svg>
<div class="a" style="left:779.30px;top:253.80px;width:11.90px;height:11.70px;background:#303030;border:0.6px solid #3c3c3c;box-sizing:border-box;border-radius:1.8px;"></div>
<svg class="a" style="left:780.70px;top:255.20px;" width="9" height="9" viewBox="0 0 9 9"><path d="M3.4 0.8 V8.6 M1 3.4 H8.6" stroke="#dcdcdc" stroke-width="0.75"/><path d="M5.6 2.2 L4 3.4 L5.6 4.6" fill="none" stroke="#dcdcdc" stroke-width="0.6"/><path d="M8 5 L6.6 6.6 H8 L6.6 8.4" fill="none" stroke="#dcdcdc" stroke-width="0.8"/></svg>
<span class="a t" style="top:274px;font-size:6.0px;line-height:6px;height:6px;color:#dedede;left:675.70px;transform-origin:0 50%;transform:scaleX(0.878);">Schnellaktionen</span>
<div class="a" style="left:675.40px;top:284.60px;width:55.20px;height:10.40px;border:0.7px solid #626262;box-sizing:border-box;border-radius:2px;"></div>
<span class="a t" style="top:287px;font-size:5.9px;line-height:6px;height:6px;color:#e2e2e2;left:682.00px;transform-origin:0 50%;transform:scaleX(0.910);">Datei importieren</span>
<div class="a" style="left:736.30px;top:284.60px;width:55.30px;height:10.40px;border:0.7px solid #626262;box-sizing:border-box;border-radius:2px;"></div>
<span class="a t" style="top:287px;font-size:5.9px;line-height:6px;height:6px;color:#e2e2e2;left:750.00px;transform-origin:0 50%;transform:scaleX(0.882);">Text zu Bild</span>
<div class="a" style="left:669.40px;top:24.80px;width:0.90px;height:388.20px;background:#414141;"></div>
<div class="a" style="left:479.70px;top:254.60px;width:128.10px;height:121.00px;background:#383838;border-radius:2.4px;box-shadow:0 1px 3px rgba(0,0,0,0.35);"></div>
<div class="a" style="left:480.30px;top:255.20px;width:126.90px;height:119.80px;background:#525252;border-radius:2px;"></div>
<div class="a" style="left:480.30px;top:255.20px;width:126.90px;height:21.40px;background:#464646;border-radius:2px 2px 0 0;"></div>
<div class="a" style="left:517.00px;top:262.30px;width:35.00px;height:14.40px;background:#525252;"></div>
<span class="a t" style="top:266px;font-size:6.0px;line-height:6px;height:6px;color:#c4c4c4;font-weight:bold;left:487.80px;transform-origin:0 50%;transform:scaleX(0.956);">Datenzusa</span>
<span class="a t" style="top:266px;font-size:6.0px;line-height:6px;height:6px;color:#ffffff;font-weight:bold;left:526.10px;transform-origin:0 50%;transform:scaleX(0.973);">Skripte</span>
<svg class="a" style="left:520.20px;top:266.40px;" width="3.6" height="5.2" viewBox="0 0 3.6 5.2"><path d="M0.5 2 L1.8 0.6 L3.1 2 M0.5 3.2 L1.8 4.6 L3.1 3.2" fill="none" stroke="#c8c8c8" stroke-width="0.6"/></svg>
<span class="a t" style="top:266px;font-size:6.0px;line-height:6px;height:6px;color:#c4c4c4;font-weight:bold;left:559.00px;transform-origin:0 50%;">Skriptetike</span>
<svg class="a" style="left:600.80px;top:266.80px;" width="5" height="4.4" viewBox="0 0 5 4.4"><path d="M0.3 0.6 H4.7 M0.3 2.2 H4.7 M0.3 3.8 H4.7" stroke="#c8c8c8" stroke-width="0.8"/></svg>
<span class="a t" style="top:256px;font-size:4.8px;line-height:5px;height:5px;color:#c8c8c8;font-weight:bold;left:592.37px;transform-origin:50% 50%;">«</span>
<svg class="a" style="left:600.80px;top:256.30px;" width="5" height="5" viewBox="0 0 5 5"><path d="M0.7 0.7 L4.3 4.3 M4.3 0.7 L0.7 4.3" stroke="#e0e0e0" stroke-width="0.9"/></svg>
<div class="a" style="left:480.30px;top:346.30px;width:120.70px;height:11.40px;background:#47688b;"></div>
<div class="a" style="left:480.30px;top:288.80px;width:120.70px;height:0.60px;background:#4d4d4d;"></div>
<div class="a" style="left:480.30px;top:300.30px;width:120.70px;height:0.60px;background:#4d4d4d;"></div>
<div class="a" style="left:480.30px;top:311.80px;width:120.70px;height:0.60px;background:#4d4d4d;"></div>
<div class="a" style="left:480.30px;top:323.40px;width:120.70px;height:0.60px;background:#4d4d4d;"></div>
<div class="a" style="left:480.30px;top:335.00px;width:120.70px;height:0.60px;background:#4d4d4d;"></div>
<svg class="a" style="left:504.70px;top:279.60px;" width="7.6" height="6.4" viewBox="0 0 7.6 6.4"><path d="M1.8 0.5 H5.2 M1.4 1.7 H4.8 M3.3 1.8 Q2 2.8 3.4 3.5 Q4.8 4.2 3.6 5.3 M0.3 5.7 H4.8" fill="none" stroke="#e0e0e0" stroke-width="0.85"/><circle cx="6.1" cy="4.5" r="1.0" fill="none" stroke="#e0e0e0" stroke-width="0.7"/><path d="M7.1 3.6 V6.2" stroke="#e0e0e0" stroke-width="0.6"/></svg>
<span class="a t" style="top:280px;font-size:5.8px;line-height:6px;height:6px;color:#dedede;left:515.80px;transform-origin:0 50%;transform:scaleX(0.906);">Indic Preferences</span>
<svg class="a" style="left:486.10px;top:292.10px;" width="3" height="5" viewBox="0 0 3 5"><path d="M0.6 0.6 L2.4 2.5 L0.6 4.4" fill="none" stroke="#b8b8b8" stroke-width="0.7"/></svg>
<svg class="a" style="left:504.60px;top:291.00px;" width="8" height="6.8" viewBox="0 0 8 6.8"><path d="M0.3 0.8 H3 L3.8 1.8 H7.7 V6.5 H0.3 Z" fill="#cdcdcd"/></svg>
<span class="a t" style="top:292px;font-size:5.8px;line-height:6px;height:6px;color:#dedede;left:515.80px;transform-origin:0 50%;transform:scaleX(0.882);">Samples</span>
<svg class="a" style="left:486.10px;top:303.50px;" width="3" height="5" viewBox="0 0 3 5"><path d="M0.6 0.6 L2.4 2.5 L0.6 4.4" fill="none" stroke="#b8b8b8" stroke-width="0.7"/></svg>
<svg class="a" style="left:493.60px;top:302.40px;" width="8" height="6.8" viewBox="0 0 8 6.8"><path d="M0.3 0.8 H3 L3.8 1.8 H7.7 V6.5 H0.3 Z" fill="#cdcdcd"/></svg>
<span class="a t" style="top:303px;font-size:5.8px;line-height:6px;height:6px;color:#dedede;left:504.75px;transform-origin:0 50%;transform:scaleX(0.909);">Community</span>
<svg class="a" style="left:484.70px;top:316.30px;" width="5" height="3" viewBox="0 0 5 3"><path d="M0.6 0.6 L2.5 2.4 L4.4 0.6" fill="none" stroke="#b8b8b8" stroke-width="0.7"/></svg>
<svg class="a" style="left:493.60px;top:314.10px;" width="8" height="6.8" viewBox="0 0 8 6.8"><path d="M0.3 0.8 H3 L3.8 1.8 H7.7 V6.5 H0.3 Z" fill="#cdcdcd"/></svg>
<span class="a t" style="top:315px;font-size:5.8px;line-height:6px;height:6px;color:#dedede;left:504.75px;transform-origin:0 50%;transform:scaleX(0.890);">Benutzer</span>
<svg class="a" style="left:504.70px;top:325.80px;" width="7.6" height="6.4" viewBox="0 0 7.6 6.4"><path d="M1.8 0.5 H5.2 M1.4 1.7 H4.8 M3.3 1.8 Q2 2.8 3.4 3.5 Q4.8 4.2 3.6 5.3 M0.3 5.7 H4.8" fill="none" stroke="#e0e0e0" stroke-width="0.85"/><circle cx="6.1" cy="4.5" r="1.0" fill="none" stroke="#e0e0e0" stroke-width="0.7"/><path d="M7.1 3.6 V6.2" stroke="#e0e0e0" stroke-width="0.6"/></svg>
<span class="a t" style="top:326px;font-size:5.8px;line-height:6px;height:6px;color:#dedede;left:515.80px;transform-origin:0 50%;transform:scaleX(0.914);">pivot</span>
<svg class="a" style="left:504.70px;top:337.80px;" width="7.6" height="6.4" viewBox="0 0 7.6 6.4"><path d="M1.8 0.5 H5.2 M1.4 1.7 H4.8 M3.3 1.8 Q2 2.8 3.4 3.5 Q4.8 4.2 3.6 5.3 M0.3 5.7 H4.8" fill="none" stroke="#e0e0e0" stroke-width="0.85"/><circle cx="6.1" cy="4.5" r="1.0" fill="none" stroke="#e0e0e0" stroke-width="0.7"/><path d="M7.1 3.6 V6.2" stroke="#e0e0e0" stroke-width="0.6"/></svg>
<span class="a t" style="top:338px;font-size:5.8px;line-height:6px;height:6px;color:#dedede;left:515.80px;transform-origin:0 50%;transform:scaleX(0.917);">smarttable-imposed</span>
<svg class="a" style="left:504.70px;top:349.10px;" width="7.6" height="6.4" viewBox="0 0 7.6 6.4"><path d="M1.8 0.5 H5.2 M1.4 1.7 H4.8 M3.3 1.8 Q2 2.8 3.4 3.5 Q4.8 4.2 3.6 5.3 M0.3 5.7 H4.8" fill="none" stroke="#e0e0e0" stroke-width="0.85"/><circle cx="6.1" cy="4.5" r="1.0" fill="none" stroke="#e0e0e0" stroke-width="0.7"/><path d="M7.1 3.6 V6.2" stroke="#e0e0e0" stroke-width="0.6"/></svg>
<span class="a t" style="top:350px;font-size:5.8px;line-height:6px;height:6px;color:#e6e6e6;left:515.80px;transform-origin:0 50%;transform:scaleX(0.916);">smarttable</span>
<div class="a" style="left:601.00px;top:276.70px;width:6.20px;height:81.00px;background:#4f4f4f;"></div>
<div class="a" style="left:602.00px;top:290.00px;width:4.20px;height:61.00px;background:#6a6a6a;border-radius:2.1px;"></div>
<svg class="a" style="left:601.40px;top:279.20px;" width="4.4" height="2.6" viewBox="0 0 4.4 2.6"><path d="M0.5 2.1 L2.2 0.5 L3.9 2.1" fill="none" stroke="#a8a8a8" stroke-width="0.65"/></svg>
<svg class="a" style="left:601.40px;top:353.60px;" width="4.4" height="2.6" viewBox="0 0 4.4 2.6"><path d="M0.5 0.5 L2.2 2.1 L3.9 0.5" fill="none" stroke="#a8a8a8" stroke-width="0.65"/></svg>
<div class="a" style="left:480.30px;top:371.30px;width:126.90px;height:3.70px;background:#424242;"></div>
<div class="a" style="left:538.00px;top:372.60px;width:12.00px;height:1.00px;background:#5a5a5a;"></div>
<svg class="a" style="left:589.20px;top:360.90px;" width="6.8" height="6.8" viewBox="0 0 6.8 6.8"><circle cx="3.4" cy="3.4" r="3.2" fill="#eaeaea"/><rect x="2.9" y="2.9" width="1" height="2.6" fill="#444"/><rect x="2.9" y="1.3" width="1" height="1" fill="#444"/></svg>
<div class="a" style="left:214.00px;top:385.00px;width:236.40px;height:18.40px;background:#3e3e3e;border-radius:2.2px;"></div>
<div class="a" style="left:216.60px;top:387.20px;width:1.80px;height:14.00px;background:#2a2a2a;"></div>
<div class="a" style="left:222.00px;top:387.20px;width:80.40px;height:14.00px;border:0.7px solid #515151;box-sizing:border-box;border-radius:1.5px;"></div>
<div class="a" style="left:305.00px;top:387.20px;width:76.00px;height:14.00px;border:0.7px solid #515151;box-sizing:border-box;border-radius:1.5px;"></div>
<svg class="a" style="left:226.80px;top:390.60px;" width="9.2" height="7.8" viewBox="0 0 9.2 7.8"><rect x="0.4" y="0.4" width="8.4" height="7" fill="none" stroke="#d6d6d6" stroke-width="0.8"/><path d="M0.4 0.4 L8.8 7.4 M8.8 0.4 L0.4 7.4" stroke="#d6d6d6" stroke-width="0.6"/></svg>
<span class="a t" style="top:391px;font-size:6.4px;line-height:7px;height:7px;color:#dcdcdc;left:238.50px;transform-origin:0 50%;transform:scaleX(0.969);">Rahmen hinzufügen</span>
<svg class="a" style="left:308.40px;top:389.80px;" width="9.6" height="9.2" viewBox="0 0 9.6 9.2"><path d="M0.5 8.4 V3.4 L2.2 2 H5 L6.2 3.4" fill="none" stroke="#d6d6d6" stroke-width="0.8"/><path d="M3 1.6 L4.2 0.5 H7.5 L8.6 1.8 V4" fill="none" stroke="#d6d6d6" stroke-width="0.7"/><circle cx="6.2" cy="6.2" r="2.5" fill="none" stroke="#d6d6d6" stroke-width="0.8"/><path d="M6.2 4.8 V7.6 M4.8 6.2 H7.6" stroke="#d6d6d6" stroke-width="0.8"/><path d="M0.5 8.4 H3.4" stroke="#d6d6d6" stroke-width="0.8"/></svg>
<span class="a t" style="top:391px;font-size:6.4px;line-height:7px;height:7px;color:#dcdcdc;left:320.25px;transform-origin:0 50%;transform:scaleX(0.966);">Bilderstellung starten</span>
<span class="a t" style="top:389px;font-size:9.5px;line-height:11px;height:11px;color:#dcdcdc;left:388.30px;transform-origin:50% 50%;font-family:'Liberation Serif',serif;">T</span>
<svg class="a" style="left:405.40px;top:390.00px;" width="6.8" height="8.6" viewBox="0 0 6.8 8.6"><path d="M0.5 0.5 H4.2 L6.3 2.6 V8.1 H0.5 Z" fill="none" stroke="#d6d6d6" stroke-width="0.8"/><path d="M4.2 0.5 V2.6 H6.3" fill="none" stroke="#d6d6d6" stroke-width="0.6"/></svg>
<svg class="a" style="left:422.40px;top:390.00px;" width="8.6" height="9.2" viewBox="0 0 8.6 9.2"><path d="M0.5 0.5 H4.2 L6.3 2.6 V4.4 M3.4 8.1 H0.5 V0.5" fill="none" stroke="#d6d6d6" stroke-width="0.8"/><circle cx="6" cy="6.6" r="2.1" fill="none" stroke="#d6d6d6" stroke-width="0.8"/><path d="M6 5.5 V7.7 M4.9 6.6 H7.1" stroke="#d6d6d6" stroke-width="0.6"/></svg>
<div class="a" style="left:438.65px;top:393.80px;width:1.10px;height:1.10px;background:#d6d6d6;border-radius:0.55px;"></div>
<div class="a" style="left:441.25px;top:393.80px;width:1.10px;height:1.10px;background:#d6d6d6;border-radius:0.55px;"></div>
<div class="a" style="left:443.85px;top:393.80px;width:1.10px;height:1.10px;background:#d6d6d6;border-radius:0.55px;"></div>
</body></html>
